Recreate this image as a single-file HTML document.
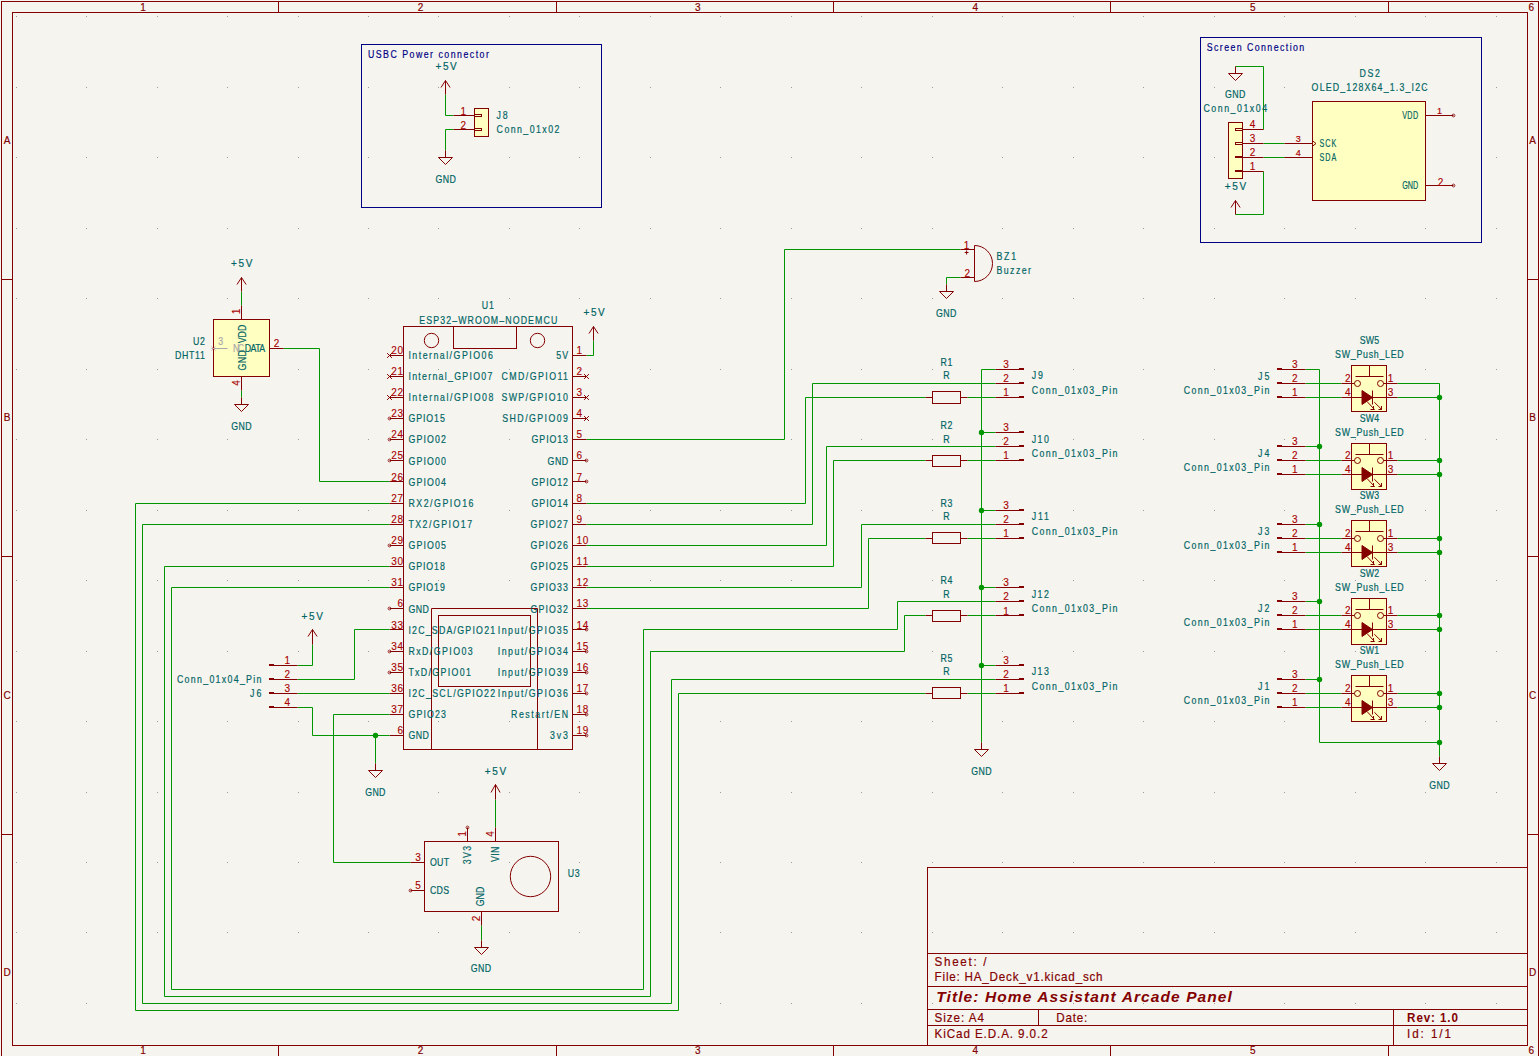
<!DOCTYPE html>
<html><head><meta charset="utf-8"><style>
html,body{margin:0;padding:0;background:#F5F4EF;}
svg{display:block;}
text{font-family:"Liberation Sans",sans-serif;}
</style></head><body>
<svg width="1539" height="1056" viewBox="0 0 1539 1056">
<rect x="0" y="0" width="1539" height="1056" fill="#F5F4EF"/>
<rect x="16" y="16" width="1" height="1" fill="#9A9A9A"/>
<rect x="16" y="87" width="1" height="1" fill="#9A9A9A"/>
<rect x="16" y="157" width="1" height="1" fill="#9A9A9A"/>
<rect x="16" y="228" width="1" height="1" fill="#9A9A9A"/>
<rect x="16" y="298" width="1" height="1" fill="#9A9A9A"/>
<rect x="16" y="369" width="1" height="1" fill="#9A9A9A"/>
<rect x="16" y="439" width="1" height="1" fill="#9A9A9A"/>
<rect x="16" y="510" width="1" height="1" fill="#9A9A9A"/>
<rect x="16" y="580" width="1" height="1" fill="#9A9A9A"/>
<rect x="16" y="651" width="1" height="1" fill="#9A9A9A"/>
<rect x="16" y="721" width="1" height="1" fill="#9A9A9A"/>
<rect x="16" y="792" width="1" height="1" fill="#9A9A9A"/>
<rect x="16" y="862" width="1" height="1" fill="#9A9A9A"/>
<rect x="16" y="932" width="1" height="1" fill="#9A9A9A"/>
<rect x="16" y="1003" width="1" height="1" fill="#9A9A9A"/>
<rect x="86" y="16" width="1" height="1" fill="#9A9A9A"/>
<rect x="86" y="87" width="1" height="1" fill="#9A9A9A"/>
<rect x="86" y="157" width="1" height="1" fill="#9A9A9A"/>
<rect x="86" y="228" width="1" height="1" fill="#9A9A9A"/>
<rect x="86" y="298" width="1" height="1" fill="#9A9A9A"/>
<rect x="86" y="369" width="1" height="1" fill="#9A9A9A"/>
<rect x="86" y="439" width="1" height="1" fill="#9A9A9A"/>
<rect x="86" y="510" width="1" height="1" fill="#9A9A9A"/>
<rect x="86" y="580" width="1" height="1" fill="#9A9A9A"/>
<rect x="86" y="651" width="1" height="1" fill="#9A9A9A"/>
<rect x="86" y="721" width="1" height="1" fill="#9A9A9A"/>
<rect x="86" y="792" width="1" height="1" fill="#9A9A9A"/>
<rect x="86" y="862" width="1" height="1" fill="#9A9A9A"/>
<rect x="86" y="932" width="1" height="1" fill="#9A9A9A"/>
<rect x="86" y="1003" width="1" height="1" fill="#9A9A9A"/>
<rect x="157" y="16" width="1" height="1" fill="#9A9A9A"/>
<rect x="157" y="87" width="1" height="1" fill="#9A9A9A"/>
<rect x="157" y="157" width="1" height="1" fill="#9A9A9A"/>
<rect x="157" y="228" width="1" height="1" fill="#9A9A9A"/>
<rect x="157" y="298" width="1" height="1" fill="#9A9A9A"/>
<rect x="157" y="369" width="1" height="1" fill="#9A9A9A"/>
<rect x="157" y="439" width="1" height="1" fill="#9A9A9A"/>
<rect x="157" y="510" width="1" height="1" fill="#9A9A9A"/>
<rect x="157" y="580" width="1" height="1" fill="#9A9A9A"/>
<rect x="157" y="651" width="1" height="1" fill="#9A9A9A"/>
<rect x="157" y="721" width="1" height="1" fill="#9A9A9A"/>
<rect x="157" y="792" width="1" height="1" fill="#9A9A9A"/>
<rect x="157" y="862" width="1" height="1" fill="#9A9A9A"/>
<rect x="157" y="932" width="1" height="1" fill="#9A9A9A"/>
<rect x="157" y="1003" width="1" height="1" fill="#9A9A9A"/>
<rect x="227" y="16" width="1" height="1" fill="#9A9A9A"/>
<rect x="227" y="87" width="1" height="1" fill="#9A9A9A"/>
<rect x="227" y="157" width="1" height="1" fill="#9A9A9A"/>
<rect x="227" y="228" width="1" height="1" fill="#9A9A9A"/>
<rect x="227" y="298" width="1" height="1" fill="#9A9A9A"/>
<rect x="227" y="369" width="1" height="1" fill="#9A9A9A"/>
<rect x="227" y="439" width="1" height="1" fill="#9A9A9A"/>
<rect x="227" y="510" width="1" height="1" fill="#9A9A9A"/>
<rect x="227" y="580" width="1" height="1" fill="#9A9A9A"/>
<rect x="227" y="651" width="1" height="1" fill="#9A9A9A"/>
<rect x="227" y="721" width="1" height="1" fill="#9A9A9A"/>
<rect x="227" y="792" width="1" height="1" fill="#9A9A9A"/>
<rect x="227" y="862" width="1" height="1" fill="#9A9A9A"/>
<rect x="227" y="932" width="1" height="1" fill="#9A9A9A"/>
<rect x="227" y="1003" width="1" height="1" fill="#9A9A9A"/>
<rect x="298" y="16" width="1" height="1" fill="#9A9A9A"/>
<rect x="298" y="87" width="1" height="1" fill="#9A9A9A"/>
<rect x="298" y="157" width="1" height="1" fill="#9A9A9A"/>
<rect x="298" y="228" width="1" height="1" fill="#9A9A9A"/>
<rect x="298" y="298" width="1" height="1" fill="#9A9A9A"/>
<rect x="298" y="369" width="1" height="1" fill="#9A9A9A"/>
<rect x="298" y="439" width="1" height="1" fill="#9A9A9A"/>
<rect x="298" y="510" width="1" height="1" fill="#9A9A9A"/>
<rect x="298" y="580" width="1" height="1" fill="#9A9A9A"/>
<rect x="298" y="651" width="1" height="1" fill="#9A9A9A"/>
<rect x="298" y="721" width="1" height="1" fill="#9A9A9A"/>
<rect x="298" y="792" width="1" height="1" fill="#9A9A9A"/>
<rect x="298" y="862" width="1" height="1" fill="#9A9A9A"/>
<rect x="298" y="932" width="1" height="1" fill="#9A9A9A"/>
<rect x="298" y="1003" width="1" height="1" fill="#9A9A9A"/>
<rect x="368" y="16" width="1" height="1" fill="#9A9A9A"/>
<rect x="368" y="87" width="1" height="1" fill="#9A9A9A"/>
<rect x="368" y="157" width="1" height="1" fill="#9A9A9A"/>
<rect x="368" y="228" width="1" height="1" fill="#9A9A9A"/>
<rect x="368" y="298" width="1" height="1" fill="#9A9A9A"/>
<rect x="368" y="369" width="1" height="1" fill="#9A9A9A"/>
<rect x="368" y="439" width="1" height="1" fill="#9A9A9A"/>
<rect x="368" y="510" width="1" height="1" fill="#9A9A9A"/>
<rect x="368" y="580" width="1" height="1" fill="#9A9A9A"/>
<rect x="368" y="651" width="1" height="1" fill="#9A9A9A"/>
<rect x="368" y="721" width="1" height="1" fill="#9A9A9A"/>
<rect x="368" y="792" width="1" height="1" fill="#9A9A9A"/>
<rect x="368" y="862" width="1" height="1" fill="#9A9A9A"/>
<rect x="368" y="932" width="1" height="1" fill="#9A9A9A"/>
<rect x="368" y="1003" width="1" height="1" fill="#9A9A9A"/>
<rect x="438" y="16" width="1" height="1" fill="#9A9A9A"/>
<rect x="438" y="87" width="1" height="1" fill="#9A9A9A"/>
<rect x="438" y="157" width="1" height="1" fill="#9A9A9A"/>
<rect x="438" y="228" width="1" height="1" fill="#9A9A9A"/>
<rect x="438" y="298" width="1" height="1" fill="#9A9A9A"/>
<rect x="438" y="369" width="1" height="1" fill="#9A9A9A"/>
<rect x="438" y="439" width="1" height="1" fill="#9A9A9A"/>
<rect x="438" y="510" width="1" height="1" fill="#9A9A9A"/>
<rect x="438" y="580" width="1" height="1" fill="#9A9A9A"/>
<rect x="438" y="651" width="1" height="1" fill="#9A9A9A"/>
<rect x="438" y="721" width="1" height="1" fill="#9A9A9A"/>
<rect x="438" y="792" width="1" height="1" fill="#9A9A9A"/>
<rect x="438" y="862" width="1" height="1" fill="#9A9A9A"/>
<rect x="438" y="932" width="1" height="1" fill="#9A9A9A"/>
<rect x="438" y="1003" width="1" height="1" fill="#9A9A9A"/>
<rect x="509" y="16" width="1" height="1" fill="#9A9A9A"/>
<rect x="509" y="87" width="1" height="1" fill="#9A9A9A"/>
<rect x="509" y="157" width="1" height="1" fill="#9A9A9A"/>
<rect x="509" y="228" width="1" height="1" fill="#9A9A9A"/>
<rect x="509" y="298" width="1" height="1" fill="#9A9A9A"/>
<rect x="509" y="369" width="1" height="1" fill="#9A9A9A"/>
<rect x="509" y="439" width="1" height="1" fill="#9A9A9A"/>
<rect x="509" y="510" width="1" height="1" fill="#9A9A9A"/>
<rect x="509" y="580" width="1" height="1" fill="#9A9A9A"/>
<rect x="509" y="651" width="1" height="1" fill="#9A9A9A"/>
<rect x="509" y="721" width="1" height="1" fill="#9A9A9A"/>
<rect x="509" y="792" width="1" height="1" fill="#9A9A9A"/>
<rect x="509" y="862" width="1" height="1" fill="#9A9A9A"/>
<rect x="509" y="932" width="1" height="1" fill="#9A9A9A"/>
<rect x="509" y="1003" width="1" height="1" fill="#9A9A9A"/>
<rect x="579" y="16" width="1" height="1" fill="#9A9A9A"/>
<rect x="579" y="87" width="1" height="1" fill="#9A9A9A"/>
<rect x="579" y="157" width="1" height="1" fill="#9A9A9A"/>
<rect x="579" y="228" width="1" height="1" fill="#9A9A9A"/>
<rect x="579" y="298" width="1" height="1" fill="#9A9A9A"/>
<rect x="579" y="369" width="1" height="1" fill="#9A9A9A"/>
<rect x="579" y="439" width="1" height="1" fill="#9A9A9A"/>
<rect x="579" y="510" width="1" height="1" fill="#9A9A9A"/>
<rect x="579" y="580" width="1" height="1" fill="#9A9A9A"/>
<rect x="579" y="651" width="1" height="1" fill="#9A9A9A"/>
<rect x="579" y="721" width="1" height="1" fill="#9A9A9A"/>
<rect x="579" y="792" width="1" height="1" fill="#9A9A9A"/>
<rect x="579" y="862" width="1" height="1" fill="#9A9A9A"/>
<rect x="579" y="932" width="1" height="1" fill="#9A9A9A"/>
<rect x="579" y="1003" width="1" height="1" fill="#9A9A9A"/>
<rect x="650" y="16" width="1" height="1" fill="#9A9A9A"/>
<rect x="650" y="87" width="1" height="1" fill="#9A9A9A"/>
<rect x="650" y="157" width="1" height="1" fill="#9A9A9A"/>
<rect x="650" y="228" width="1" height="1" fill="#9A9A9A"/>
<rect x="650" y="298" width="1" height="1" fill="#9A9A9A"/>
<rect x="650" y="369" width="1" height="1" fill="#9A9A9A"/>
<rect x="650" y="439" width="1" height="1" fill="#9A9A9A"/>
<rect x="650" y="510" width="1" height="1" fill="#9A9A9A"/>
<rect x="650" y="580" width="1" height="1" fill="#9A9A9A"/>
<rect x="650" y="651" width="1" height="1" fill="#9A9A9A"/>
<rect x="650" y="721" width="1" height="1" fill="#9A9A9A"/>
<rect x="650" y="792" width="1" height="1" fill="#9A9A9A"/>
<rect x="650" y="862" width="1" height="1" fill="#9A9A9A"/>
<rect x="650" y="932" width="1" height="1" fill="#9A9A9A"/>
<rect x="650" y="1003" width="1" height="1" fill="#9A9A9A"/>
<rect x="720" y="16" width="1" height="1" fill="#9A9A9A"/>
<rect x="720" y="87" width="1" height="1" fill="#9A9A9A"/>
<rect x="720" y="157" width="1" height="1" fill="#9A9A9A"/>
<rect x="720" y="228" width="1" height="1" fill="#9A9A9A"/>
<rect x="720" y="298" width="1" height="1" fill="#9A9A9A"/>
<rect x="720" y="369" width="1" height="1" fill="#9A9A9A"/>
<rect x="720" y="439" width="1" height="1" fill="#9A9A9A"/>
<rect x="720" y="510" width="1" height="1" fill="#9A9A9A"/>
<rect x="720" y="580" width="1" height="1" fill="#9A9A9A"/>
<rect x="720" y="651" width="1" height="1" fill="#9A9A9A"/>
<rect x="720" y="721" width="1" height="1" fill="#9A9A9A"/>
<rect x="720" y="792" width="1" height="1" fill="#9A9A9A"/>
<rect x="720" y="862" width="1" height="1" fill="#9A9A9A"/>
<rect x="720" y="932" width="1" height="1" fill="#9A9A9A"/>
<rect x="720" y="1003" width="1" height="1" fill="#9A9A9A"/>
<rect x="791" y="16" width="1" height="1" fill="#9A9A9A"/>
<rect x="791" y="87" width="1" height="1" fill="#9A9A9A"/>
<rect x="791" y="157" width="1" height="1" fill="#9A9A9A"/>
<rect x="791" y="228" width="1" height="1" fill="#9A9A9A"/>
<rect x="791" y="298" width="1" height="1" fill="#9A9A9A"/>
<rect x="791" y="369" width="1" height="1" fill="#9A9A9A"/>
<rect x="791" y="439" width="1" height="1" fill="#9A9A9A"/>
<rect x="791" y="510" width="1" height="1" fill="#9A9A9A"/>
<rect x="791" y="580" width="1" height="1" fill="#9A9A9A"/>
<rect x="791" y="651" width="1" height="1" fill="#9A9A9A"/>
<rect x="791" y="721" width="1" height="1" fill="#9A9A9A"/>
<rect x="791" y="792" width="1" height="1" fill="#9A9A9A"/>
<rect x="791" y="862" width="1" height="1" fill="#9A9A9A"/>
<rect x="791" y="932" width="1" height="1" fill="#9A9A9A"/>
<rect x="791" y="1003" width="1" height="1" fill="#9A9A9A"/>
<rect x="861" y="16" width="1" height="1" fill="#9A9A9A"/>
<rect x="861" y="87" width="1" height="1" fill="#9A9A9A"/>
<rect x="861" y="157" width="1" height="1" fill="#9A9A9A"/>
<rect x="861" y="228" width="1" height="1" fill="#9A9A9A"/>
<rect x="861" y="298" width="1" height="1" fill="#9A9A9A"/>
<rect x="861" y="369" width="1" height="1" fill="#9A9A9A"/>
<rect x="861" y="439" width="1" height="1" fill="#9A9A9A"/>
<rect x="861" y="510" width="1" height="1" fill="#9A9A9A"/>
<rect x="861" y="580" width="1" height="1" fill="#9A9A9A"/>
<rect x="861" y="651" width="1" height="1" fill="#9A9A9A"/>
<rect x="861" y="721" width="1" height="1" fill="#9A9A9A"/>
<rect x="861" y="792" width="1" height="1" fill="#9A9A9A"/>
<rect x="861" y="862" width="1" height="1" fill="#9A9A9A"/>
<rect x="861" y="932" width="1" height="1" fill="#9A9A9A"/>
<rect x="861" y="1003" width="1" height="1" fill="#9A9A9A"/>
<rect x="932" y="16" width="1" height="1" fill="#9A9A9A"/>
<rect x="932" y="87" width="1" height="1" fill="#9A9A9A"/>
<rect x="932" y="157" width="1" height="1" fill="#9A9A9A"/>
<rect x="932" y="228" width="1" height="1" fill="#9A9A9A"/>
<rect x="932" y="298" width="1" height="1" fill="#9A9A9A"/>
<rect x="932" y="369" width="1" height="1" fill="#9A9A9A"/>
<rect x="932" y="439" width="1" height="1" fill="#9A9A9A"/>
<rect x="932" y="510" width="1" height="1" fill="#9A9A9A"/>
<rect x="932" y="580" width="1" height="1" fill="#9A9A9A"/>
<rect x="932" y="651" width="1" height="1" fill="#9A9A9A"/>
<rect x="932" y="721" width="1" height="1" fill="#9A9A9A"/>
<rect x="932" y="792" width="1" height="1" fill="#9A9A9A"/>
<rect x="932" y="862" width="1" height="1" fill="#9A9A9A"/>
<rect x="932" y="932" width="1" height="1" fill="#9A9A9A"/>
<rect x="932" y="1003" width="1" height="1" fill="#9A9A9A"/>
<rect x="1002" y="16" width="1" height="1" fill="#9A9A9A"/>
<rect x="1002" y="87" width="1" height="1" fill="#9A9A9A"/>
<rect x="1002" y="157" width="1" height="1" fill="#9A9A9A"/>
<rect x="1002" y="228" width="1" height="1" fill="#9A9A9A"/>
<rect x="1002" y="298" width="1" height="1" fill="#9A9A9A"/>
<rect x="1002" y="369" width="1" height="1" fill="#9A9A9A"/>
<rect x="1002" y="439" width="1" height="1" fill="#9A9A9A"/>
<rect x="1002" y="510" width="1" height="1" fill="#9A9A9A"/>
<rect x="1002" y="580" width="1" height="1" fill="#9A9A9A"/>
<rect x="1002" y="651" width="1" height="1" fill="#9A9A9A"/>
<rect x="1002" y="721" width="1" height="1" fill="#9A9A9A"/>
<rect x="1002" y="792" width="1" height="1" fill="#9A9A9A"/>
<rect x="1002" y="862" width="1" height="1" fill="#9A9A9A"/>
<rect x="1002" y="932" width="1" height="1" fill="#9A9A9A"/>
<rect x="1002" y="1003" width="1" height="1" fill="#9A9A9A"/>
<rect x="1073" y="16" width="1" height="1" fill="#9A9A9A"/>
<rect x="1073" y="87" width="1" height="1" fill="#9A9A9A"/>
<rect x="1073" y="157" width="1" height="1" fill="#9A9A9A"/>
<rect x="1073" y="228" width="1" height="1" fill="#9A9A9A"/>
<rect x="1073" y="298" width="1" height="1" fill="#9A9A9A"/>
<rect x="1073" y="369" width="1" height="1" fill="#9A9A9A"/>
<rect x="1073" y="439" width="1" height="1" fill="#9A9A9A"/>
<rect x="1073" y="510" width="1" height="1" fill="#9A9A9A"/>
<rect x="1073" y="580" width="1" height="1" fill="#9A9A9A"/>
<rect x="1073" y="651" width="1" height="1" fill="#9A9A9A"/>
<rect x="1073" y="721" width="1" height="1" fill="#9A9A9A"/>
<rect x="1073" y="792" width="1" height="1" fill="#9A9A9A"/>
<rect x="1073" y="862" width="1" height="1" fill="#9A9A9A"/>
<rect x="1073" y="932" width="1" height="1" fill="#9A9A9A"/>
<rect x="1073" y="1003" width="1" height="1" fill="#9A9A9A"/>
<rect x="1143" y="16" width="1" height="1" fill="#9A9A9A"/>
<rect x="1143" y="87" width="1" height="1" fill="#9A9A9A"/>
<rect x="1143" y="157" width="1" height="1" fill="#9A9A9A"/>
<rect x="1143" y="228" width="1" height="1" fill="#9A9A9A"/>
<rect x="1143" y="298" width="1" height="1" fill="#9A9A9A"/>
<rect x="1143" y="369" width="1" height="1" fill="#9A9A9A"/>
<rect x="1143" y="439" width="1" height="1" fill="#9A9A9A"/>
<rect x="1143" y="510" width="1" height="1" fill="#9A9A9A"/>
<rect x="1143" y="580" width="1" height="1" fill="#9A9A9A"/>
<rect x="1143" y="651" width="1" height="1" fill="#9A9A9A"/>
<rect x="1143" y="721" width="1" height="1" fill="#9A9A9A"/>
<rect x="1143" y="792" width="1" height="1" fill="#9A9A9A"/>
<rect x="1143" y="862" width="1" height="1" fill="#9A9A9A"/>
<rect x="1143" y="932" width="1" height="1" fill="#9A9A9A"/>
<rect x="1143" y="1003" width="1" height="1" fill="#9A9A9A"/>
<rect x="1214" y="16" width="1" height="1" fill="#9A9A9A"/>
<rect x="1214" y="87" width="1" height="1" fill="#9A9A9A"/>
<rect x="1214" y="157" width="1" height="1" fill="#9A9A9A"/>
<rect x="1214" y="228" width="1" height="1" fill="#9A9A9A"/>
<rect x="1214" y="298" width="1" height="1" fill="#9A9A9A"/>
<rect x="1214" y="369" width="1" height="1" fill="#9A9A9A"/>
<rect x="1214" y="439" width="1" height="1" fill="#9A9A9A"/>
<rect x="1214" y="510" width="1" height="1" fill="#9A9A9A"/>
<rect x="1214" y="580" width="1" height="1" fill="#9A9A9A"/>
<rect x="1214" y="651" width="1" height="1" fill="#9A9A9A"/>
<rect x="1214" y="721" width="1" height="1" fill="#9A9A9A"/>
<rect x="1214" y="792" width="1" height="1" fill="#9A9A9A"/>
<rect x="1214" y="862" width="1" height="1" fill="#9A9A9A"/>
<rect x="1214" y="932" width="1" height="1" fill="#9A9A9A"/>
<rect x="1214" y="1003" width="1" height="1" fill="#9A9A9A"/>
<rect x="1284" y="16" width="1" height="1" fill="#9A9A9A"/>
<rect x="1284" y="87" width="1" height="1" fill="#9A9A9A"/>
<rect x="1284" y="157" width="1" height="1" fill="#9A9A9A"/>
<rect x="1284" y="228" width="1" height="1" fill="#9A9A9A"/>
<rect x="1284" y="298" width="1" height="1" fill="#9A9A9A"/>
<rect x="1284" y="369" width="1" height="1" fill="#9A9A9A"/>
<rect x="1284" y="439" width="1" height="1" fill="#9A9A9A"/>
<rect x="1284" y="510" width="1" height="1" fill="#9A9A9A"/>
<rect x="1284" y="580" width="1" height="1" fill="#9A9A9A"/>
<rect x="1284" y="651" width="1" height="1" fill="#9A9A9A"/>
<rect x="1284" y="721" width="1" height="1" fill="#9A9A9A"/>
<rect x="1284" y="792" width="1" height="1" fill="#9A9A9A"/>
<rect x="1284" y="862" width="1" height="1" fill="#9A9A9A"/>
<rect x="1284" y="932" width="1" height="1" fill="#9A9A9A"/>
<rect x="1284" y="1003" width="1" height="1" fill="#9A9A9A"/>
<rect x="1355" y="16" width="1" height="1" fill="#9A9A9A"/>
<rect x="1355" y="87" width="1" height="1" fill="#9A9A9A"/>
<rect x="1355" y="157" width="1" height="1" fill="#9A9A9A"/>
<rect x="1355" y="228" width="1" height="1" fill="#9A9A9A"/>
<rect x="1355" y="298" width="1" height="1" fill="#9A9A9A"/>
<rect x="1355" y="369" width="1" height="1" fill="#9A9A9A"/>
<rect x="1355" y="439" width="1" height="1" fill="#9A9A9A"/>
<rect x="1355" y="510" width="1" height="1" fill="#9A9A9A"/>
<rect x="1355" y="580" width="1" height="1" fill="#9A9A9A"/>
<rect x="1355" y="651" width="1" height="1" fill="#9A9A9A"/>
<rect x="1355" y="721" width="1" height="1" fill="#9A9A9A"/>
<rect x="1355" y="792" width="1" height="1" fill="#9A9A9A"/>
<rect x="1355" y="862" width="1" height="1" fill="#9A9A9A"/>
<rect x="1355" y="932" width="1" height="1" fill="#9A9A9A"/>
<rect x="1355" y="1003" width="1" height="1" fill="#9A9A9A"/>
<rect x="1425" y="16" width="1" height="1" fill="#9A9A9A"/>
<rect x="1425" y="87" width="1" height="1" fill="#9A9A9A"/>
<rect x="1425" y="157" width="1" height="1" fill="#9A9A9A"/>
<rect x="1425" y="228" width="1" height="1" fill="#9A9A9A"/>
<rect x="1425" y="298" width="1" height="1" fill="#9A9A9A"/>
<rect x="1425" y="369" width="1" height="1" fill="#9A9A9A"/>
<rect x="1425" y="439" width="1" height="1" fill="#9A9A9A"/>
<rect x="1425" y="510" width="1" height="1" fill="#9A9A9A"/>
<rect x="1425" y="580" width="1" height="1" fill="#9A9A9A"/>
<rect x="1425" y="651" width="1" height="1" fill="#9A9A9A"/>
<rect x="1425" y="721" width="1" height="1" fill="#9A9A9A"/>
<rect x="1425" y="792" width="1" height="1" fill="#9A9A9A"/>
<rect x="1425" y="862" width="1" height="1" fill="#9A9A9A"/>
<rect x="1425" y="932" width="1" height="1" fill="#9A9A9A"/>
<rect x="1425" y="1003" width="1" height="1" fill="#9A9A9A"/>
<rect x="1496" y="16" width="1" height="1" fill="#9A9A9A"/>
<rect x="1496" y="87" width="1" height="1" fill="#9A9A9A"/>
<rect x="1496" y="157" width="1" height="1" fill="#9A9A9A"/>
<rect x="1496" y="228" width="1" height="1" fill="#9A9A9A"/>
<rect x="1496" y="298" width="1" height="1" fill="#9A9A9A"/>
<rect x="1496" y="369" width="1" height="1" fill="#9A9A9A"/>
<rect x="1496" y="439" width="1" height="1" fill="#9A9A9A"/>
<rect x="1496" y="510" width="1" height="1" fill="#9A9A9A"/>
<rect x="1496" y="580" width="1" height="1" fill="#9A9A9A"/>
<rect x="1496" y="651" width="1" height="1" fill="#9A9A9A"/>
<rect x="1496" y="721" width="1" height="1" fill="#9A9A9A"/>
<rect x="1496" y="792" width="1" height="1" fill="#9A9A9A"/>
<rect x="1496" y="862" width="1" height="1" fill="#9A9A9A"/>
<rect x="1496" y="932" width="1" height="1" fill="#9A9A9A"/>
<rect x="1496" y="1003" width="1" height="1" fill="#9A9A9A"/>
<rect x="1.5" y="1.5" width="1537" height="1056" stroke="#840000" stroke-width="1" fill="none"/>
<rect x="12.5" y="12.5" width="1515" height="1033" stroke="#840000" stroke-width="1" fill="none"/>
<line x1="278.5" y1="1.5" x2="278.5" y2="12.5" stroke="#840000" stroke-width="1"/>
<line x1="278.5" y1="1045.5" x2="278.5" y2="1056" stroke="#840000" stroke-width="1"/>
<line x1="556.5" y1="1.5" x2="556.5" y2="12.5" stroke="#840000" stroke-width="1"/>
<line x1="556.5" y1="1045.5" x2="556.5" y2="1056" stroke="#840000" stroke-width="1"/>
<line x1="833.5" y1="1.5" x2="833.5" y2="12.5" stroke="#840000" stroke-width="1"/>
<line x1="833.5" y1="1045.5" x2="833.5" y2="1056" stroke="#840000" stroke-width="1"/>
<line x1="1110.5" y1="1.5" x2="1110.5" y2="12.5" stroke="#840000" stroke-width="1"/>
<line x1="1110.5" y1="1045.5" x2="1110.5" y2="1056" stroke="#840000" stroke-width="1"/>
<line x1="1388.5" y1="1.5" x2="1388.5" y2="12.5" stroke="#840000" stroke-width="1"/>
<line x1="1388.5" y1="1045.5" x2="1388.5" y2="1056" stroke="#840000" stroke-width="1"/>
<line x1="1.5" y1="279.5" x2="12.5" y2="279.5" stroke="#840000" stroke-width="1"/>
<line x1="1527.5" y1="279.5" x2="1538.5" y2="279.5" stroke="#840000" stroke-width="1"/>
<line x1="1.5" y1="556.5" x2="12.5" y2="556.5" stroke="#840000" stroke-width="1"/>
<line x1="1527.5" y1="556.5" x2="1538.5" y2="556.5" stroke="#840000" stroke-width="1"/>
<line x1="1.5" y1="834.5" x2="12.5" y2="834.5" stroke="#840000" stroke-width="1"/>
<line x1="1527.5" y1="834.5" x2="1538.5" y2="834.5" stroke="#840000" stroke-width="1"/>
<text transform="translate(143 10.9)" fill="#840000" font-size="10" text-anchor="middle" textLength="5.6" lengthAdjust="spacing" stroke="#840000" stroke-width="0.18">1</text>
<text transform="translate(143 1053.6)" fill="#840000" font-size="10" text-anchor="middle" textLength="5.6" lengthAdjust="spacing" stroke="#840000" stroke-width="0.18">1</text>
<text transform="translate(420.45 10.9)" fill="#840000" font-size="10" text-anchor="middle" textLength="5.8" lengthAdjust="spacing" stroke="#840000" stroke-width="0.18">2</text>
<text transform="translate(420.45 1053.6)" fill="#840000" font-size="10" text-anchor="middle" textLength="5.8" lengthAdjust="spacing" stroke="#840000" stroke-width="0.18">2</text>
<text transform="translate(697.9 10.9)" fill="#840000" font-size="10" text-anchor="middle" textLength="5.8" lengthAdjust="spacing" stroke="#840000" stroke-width="0.18">3</text>
<text transform="translate(697.9 1053.6)" fill="#840000" font-size="10" text-anchor="middle" textLength="5.8" lengthAdjust="spacing" stroke="#840000" stroke-width="0.18">3</text>
<text transform="translate(975.35 10.9)" fill="#840000" font-size="10" text-anchor="middle" textLength="5.8" lengthAdjust="spacing" stroke="#840000" stroke-width="0.18">4</text>
<text transform="translate(975.35 1053.6)" fill="#840000" font-size="10" text-anchor="middle" textLength="5.8" lengthAdjust="spacing" stroke="#840000" stroke-width="0.18">4</text>
<text transform="translate(1252.8 10.9)" fill="#840000" font-size="10" text-anchor="middle" textLength="5.8" lengthAdjust="spacing" stroke="#840000" stroke-width="0.18">5</text>
<text transform="translate(1252.8 1053.6)" fill="#840000" font-size="10" text-anchor="middle" textLength="5.8" lengthAdjust="spacing" stroke="#840000" stroke-width="0.18">5</text>
<text transform="translate(1531.25 10.9)" fill="#840000" font-size="10" text-anchor="middle" textLength="5.8" lengthAdjust="spacing" stroke="#840000" stroke-width="0.18">6</text>
<text transform="translate(1531.25 1053.6)" fill="#840000" font-size="10" text-anchor="middle" textLength="5.8" lengthAdjust="spacing" stroke="#840000" stroke-width="0.18">6</text>
<text transform="translate(7 143.8)" fill="#840000" font-size="10" text-anchor="middle" textLength="5.8" lengthAdjust="spacing" stroke="#840000" stroke-width="0.18">A</text>
<text transform="translate(1532.5 143.8)" fill="#840000" font-size="10" text-anchor="middle" textLength="5.8" lengthAdjust="spacing" stroke="#840000" stroke-width="0.18">A</text>
<text transform="translate(7 421.25)" fill="#840000" font-size="10" text-anchor="middle" textLength="5.8" lengthAdjust="spacing" stroke="#840000" stroke-width="0.18">B</text>
<text transform="translate(1532.5 421.25)" fill="#840000" font-size="10" text-anchor="middle" textLength="5.8" lengthAdjust="spacing" stroke="#840000" stroke-width="0.18">B</text>
<text transform="translate(7 698.7)" fill="#840000" font-size="10" text-anchor="middle" textLength="5.8" lengthAdjust="spacing" stroke="#840000" stroke-width="0.18">C</text>
<text transform="translate(1532.5 698.7)" fill="#840000" font-size="10" text-anchor="middle" textLength="5.8" lengthAdjust="spacing" stroke="#840000" stroke-width="0.18">C</text>
<text transform="translate(7 976.15)" fill="#840000" font-size="10" text-anchor="middle" textLength="5.8" lengthAdjust="spacing" stroke="#840000" stroke-width="0.18">D</text>
<text transform="translate(1532.5 976.15)" fill="#840000" font-size="10" text-anchor="middle" textLength="5.8" lengthAdjust="spacing" stroke="#840000" stroke-width="0.18">D</text>
<rect x="927.5" y="867.5" width="600" height="178" stroke="#840000" stroke-width="1" fill="none"/>
<line x1="927.5" y1="953.5" x2="1527.5" y2="953.5" stroke="#840000" stroke-width="1"/>
<line x1="927.5" y1="986.5" x2="1527.5" y2="986.5" stroke="#840000" stroke-width="1"/>
<line x1="927.5" y1="1009.5" x2="1527.5" y2="1009.5" stroke="#840000" stroke-width="1"/>
<line x1="927.5" y1="1025.5" x2="1527.5" y2="1025.5" stroke="#840000" stroke-width="1"/>
<line x1="1038.5" y1="1009.5" x2="1038.5" y2="1025.5" stroke="#840000" stroke-width="1"/>
<line x1="1393.5" y1="1009.5" x2="1393.5" y2="1045.5" stroke="#840000" stroke-width="1"/>
<text transform="translate(934.6 966) scale(0.97 1)" fill="#840000" font-size="12" textLength="53.6" lengthAdjust="spacing" stroke="#840000" stroke-width="0.18">Sheet: /</text>
<text transform="translate(934.6 980.5) scale(0.97 1)" fill="#840000" font-size="12" textLength="173.2" lengthAdjust="spacing" stroke="#840000" stroke-width="0.18">File: HA_Deck_v1.kicad_sch</text>
<text transform="translate(936.2 1002)" fill="#840000" font-size="15.5" textLength="295.7" lengthAdjust="spacing" font-weight="bold" font-style="italic">Title: Home Assistant Arcade Panel</text>
<text transform="translate(934.6 1021.7) scale(0.97 1)" fill="#840000" font-size="12" textLength="50.9" lengthAdjust="spacing" stroke="#840000" stroke-width="0.18">Size: A4</text>
<text transform="translate(1056.2 1021.7) scale(0.97 1)" fill="#840000" font-size="12" textLength="32.0" lengthAdjust="spacing" stroke="#840000" stroke-width="0.18">Date:</text>
<text transform="translate(934.6 1037.7) scale(0.97 1)" fill="#840000" font-size="12" textLength="116.5" lengthAdjust="spacing" stroke="#840000" stroke-width="0.18">KiCad E.D.A. 9.0.2</text>
<text transform="translate(1407.1 1021.9) scale(0.97 1)" fill="#840000" font-size="12" textLength="52.4" lengthAdjust="spacing" font-weight="bold">Rev: 1.0</text>
<text transform="translate(1407.1 1037.8) scale(0.97 1)" fill="#840000" font-size="12" textLength="45.2" lengthAdjust="spacing" stroke="#840000" stroke-width="0.18">Id: 1/1</text>
<rect x="361.5" y="44.5" width="240" height="163" stroke="#000084" stroke-width="1" fill="none"/>
<text transform="translate(367.9 57.5) scale(0.88 1)" fill="#000084" font-size="10.0" textLength="137.5" lengthAdjust="spacing" stroke="#000084" stroke-width="0.18">USBC Power connector</text>
<polyline points="445.5,94.5 445.5,115.5 453.5,115.5" stroke="#009600" stroke-width="1" fill="none"/>
<polyline points="453.5,129.5 445.5,129.5 445.5,150.5" stroke="#009600" stroke-width="1" fill="none"/>
<line x1="453.5" y1="115.5" x2="474.5" y2="115.5" stroke="#840000" stroke-width="1"/>
<line x1="453.5" y1="129.5" x2="474.5" y2="129.5" stroke="#840000" stroke-width="1"/>
<rect x="474.5" y="108.5" width="14" height="28" stroke="#840000" stroke-width="1" fill="#FFFFC2"/>
<rect x="474.5" y="114.5" width="7" height="2" stroke="#840000" stroke-width="1" fill="none"/>
<rect x="474.5" y="128.5" width="7" height="2" stroke="#840000" stroke-width="1" fill="none"/>
<text transform="translate(463.4 114.6)" fill="#A90000" font-size="10.0" text-anchor="middle" textLength="5.6" lengthAdjust="spacing" stroke="#A90000" stroke-width="0.12">1</text>
<text transform="translate(463.4 128.7)" fill="#A90000" font-size="10.0" text-anchor="middle" textLength="5.6" lengthAdjust="spacing" stroke="#A90000" stroke-width="0.12">2</text>
<text transform="translate(496.6 118.5) scale(0.88 1)" fill="#006464" font-size="10.0" textLength="12.5" lengthAdjust="spacing" stroke="#006464" stroke-width="0.18">J8</text>
<text transform="translate(496.6 133) scale(0.88 1)" fill="#006464" font-size="10.0" textLength="71.4" lengthAdjust="spacing" stroke="#006464" stroke-width="0.18">Conn_01x02</text>
<line x1="445.5" y1="94.5" x2="445.5" y2="80.5" stroke="#840000" stroke-width="1"/>
<polyline points="441,87.5 445.5,80.5 450.1,87.5" stroke="#840000" stroke-width="1" fill="none"/>
<text transform="translate(446.08 69.81)" fill="#006464" font-size="10.0" text-anchor="middle" textLength="21.3" lengthAdjust="spacing" stroke="#006464" stroke-width="0.18">+5V</text>
<line x1="445.5" y1="150.5" x2="445.5" y2="157.5" stroke="#840000" stroke-width="1"/>
<polygon points="438.5,157.5 452.5,157.5 445.5,164.5" stroke="#840000" stroke-width="1" fill="none"/>
<text transform="translate(445.78 182.89) scale(0.88 1)" fill="#006464" font-size="10.0" text-anchor="middle" textLength="23.1" lengthAdjust="spacing" stroke="#006464" stroke-width="0.18">GND</text>
<polyline points="241.5,305.5 241.5,291.5" stroke="#009600" stroke-width="1" fill="none"/>
<polyline points="283.5,348.5 319.5,348.5 319.5,481.5 389.5,481.5" stroke="#009600" stroke-width="1" fill="none"/>
<polyline points="241.5,390.5 241.5,397.5" stroke="#009600" stroke-width="1" fill="none"/>
<rect x="213.5" y="319.5" width="56" height="57" stroke="#840000" stroke-width="1" fill="#FFFFC2"/>
<line x1="241.5" y1="319.5" x2="241.5" y2="305.5" stroke="#840000" stroke-width="1"/>
<line x1="269.5" y1="348.5" x2="283.5" y2="348.5" stroke="#840000" stroke-width="1"/>
<line x1="241.5" y1="376.5" x2="241.5" y2="390.5" stroke="#840000" stroke-width="1"/>
<line x1="211.5" y1="348.5" x2="227.5" y2="348.5" stroke="#A8A8A8" stroke-width="1"/>
<line x1="211.5" y1="346.5" x2="215.5" y2="350.5" stroke="#E0B0B0" stroke-width="1"/>
<line x1="211.5" y1="350.5" x2="215.5" y2="346.5" stroke="#E0B0B0" stroke-width="1"/>
<text transform="translate(220.6 344.8) scale(0.88 1)" fill="#A8A8A8" font-size="10.0" text-anchor="middle" textLength="6.1" lengthAdjust="spacing" stroke="#A8A8A8" stroke-width="0.18">3</text>
<text transform="translate(233 351.7) scale(0.88 1)" fill="#A8A8A8" font-size="10.0" textLength="12.5" lengthAdjust="spacing" stroke="#A8A8A8" stroke-width="0.18">NC</text>
<text transform="translate(239.8 311.5) rotate(-90)" fill="#A90000" font-size="10.0" text-anchor="middle" textLength="5.6" lengthAdjust="spacing" stroke="#A90000" stroke-width="0.12">1</text>
<text transform="translate(239.8 383) rotate(-90)" fill="#A90000" font-size="10.0" text-anchor="middle" textLength="5.6" lengthAdjust="spacing" stroke="#A90000" stroke-width="0.12">4</text>
<text transform="translate(276.5 347.2)" fill="#A90000" font-size="10.0" text-anchor="middle" textLength="5.6" lengthAdjust="spacing" stroke="#A90000" stroke-width="0.12">2</text>
<text transform="translate(245.5 334) rotate(-90) scale(0.88 1)" fill="#006464" font-size="10.0" text-anchor="middle" textLength="21.0" lengthAdjust="spacing" stroke="#006464" stroke-width="0.18">VDD</text>
<text transform="translate(245.5 360.4) rotate(-90) scale(0.88 1)" fill="#006464" font-size="10.0" text-anchor="middle" textLength="23.2" lengthAdjust="spacing" stroke="#006464" stroke-width="0.18">GND</text>
<text transform="translate(244.7 351.7) scale(0.88 1)" fill="#006464" font-size="10.0" textLength="23.3" lengthAdjust="spacing" stroke="#006464" stroke-width="0.18">DATA</text>
<text transform="translate(204.9 344.9) scale(0.88 1)" fill="#006464" font-size="10.0" text-anchor="end" textLength="13.6" lengthAdjust="spacing" stroke="#006464" stroke-width="0.18">U2</text>
<text transform="translate(204.9 358.5) scale(0.88 1)" fill="#006464" font-size="10.0" text-anchor="end" textLength="34.1" lengthAdjust="spacing" stroke="#006464" stroke-width="0.18">DHT11</text>
<line x1="241.5" y1="291.5" x2="241.5" y2="277.5" stroke="#840000" stroke-width="1"/>
<polyline points="237,284.5 241.5,277.5 246.1,284.5" stroke="#840000" stroke-width="1" fill="none"/>
<text transform="translate(241.7 267.15)" fill="#006464" font-size="10.0" text-anchor="middle" textLength="21.3" lengthAdjust="spacing" stroke="#006464" stroke-width="0.18">+5V</text>
<line x1="241.5" y1="397.5" x2="241.5" y2="404.5" stroke="#840000" stroke-width="1"/>
<polygon points="234.5,404.5 248.5,404.5 241.5,411.5" stroke="#840000" stroke-width="1" fill="none"/>
<text transform="translate(241.4 429.56) scale(0.88 1)" fill="#006464" font-size="10.0" text-anchor="middle" textLength="23.1" lengthAdjust="spacing" stroke="#006464" stroke-width="0.18">GND</text>
<polyline points="586.5,355.5 593.5,355.5 593.5,340.5" stroke="#009600" stroke-width="1" fill="none"/>
<polyline points="586.5,439.5 784.5,439.5 784.5,249.5 960.5,249.5" stroke="#009600" stroke-width="1" fill="none"/>
<polyline points="586.5,503.5 805.5,503.5 805.5,397.5 925.5,397.5" stroke="#009600" stroke-width="1" fill="none"/>
<polyline points="586.5,524.5 812.5,524.5 812.5,383.5 995.5,383.5" stroke="#009600" stroke-width="1" fill="none"/>
<polyline points="586.5,545.5 826.5,545.5 826.5,446.5 995.5,446.5" stroke="#009600" stroke-width="1" fill="none"/>
<polyline points="586.5,566.5 833.5,566.5 833.5,460.5 925.5,460.5" stroke="#009600" stroke-width="1" fill="none"/>
<polyline points="586.5,587.5 861.5,587.5 861.5,524.5 995.5,524.5" stroke="#009600" stroke-width="1" fill="none"/>
<polyline points="586.5,608.5 868.5,608.5 868.5,538.5 925.5,538.5" stroke="#009600" stroke-width="1" fill="none"/>
<polyline points="389.5,587.5 171.5,587.5 171.5,989.5 643.5,989.5 643.5,629.5 897.5,629.5 897.5,601.5 995.5,601.5" stroke="#009600" stroke-width="1" fill="none"/>
<polyline points="389.5,566.5 164.5,566.5 164.5,996.5 650.5,996.5 650.5,651.5 904.5,651.5 904.5,615.5 925.5,615.5" stroke="#009600" stroke-width="1" fill="none"/>
<polyline points="389.5,524.5 142.5,524.5 142.5,1003.5 671.5,1003.5 671.5,679.5 995.5,679.5" stroke="#009600" stroke-width="1" fill="none"/>
<polyline points="389.5,503.5 135.5,503.5 135.5,1010.5 678.5,1010.5 678.5,693.5 925.5,693.5" stroke="#009600" stroke-width="1" fill="none"/>
<polyline points="967.5,397.5 995.5,397.5" stroke="#009600" stroke-width="1" fill="none"/>
<polyline points="967.5,460.5 995.5,460.5" stroke="#009600" stroke-width="1" fill="none"/>
<polyline points="967.5,538.5 995.5,538.5" stroke="#009600" stroke-width="1" fill="none"/>
<polyline points="967.5,615.5 995.5,615.5" stroke="#009600" stroke-width="1" fill="none"/>
<polyline points="967.5,693.5 995.5,693.5" stroke="#009600" stroke-width="1" fill="none"/>
<rect x="403.5" y="326.5" width="169" height="423" stroke="#840000" stroke-width="1" fill="none"/>
<rect x="453.5" y="326.5" width="63" height="22" stroke="#840000" stroke-width="1" fill="none"/>
<circle cx="431.5" cy="340.5" r="7.2" fill="none" stroke="#840000" stroke-width="1"/>
<circle cx="537.5" cy="340.5" r="7.2" fill="none" stroke="#840000" stroke-width="1"/>
<polyline points="431.5,749.5 431.5,608.5 537.5,608.5 537.5,749.5" stroke="#840000" stroke-width="1" fill="none"/>
<rect x="438.5" y="615.5" width="92" height="71" stroke="#840000" stroke-width="1" fill="none"/>
<line x1="389.5" y1="355.5" x2="403.5" y2="355.5" stroke="#840000" stroke-width="1"/>
<text transform="translate(403 353.77)" fill="#A90000" font-size="10.0" text-anchor="end" textLength="11.8" lengthAdjust="spacing" stroke="#A90000" stroke-width="0.12">20</text>
<text transform="translate(408.4 358.87) scale(0.88 1)" fill="#006464" font-size="10.0" textLength="95.9" lengthAdjust="spacing" stroke="#006464" stroke-width="0.18">Internal/GPIO06</text>
<line x1="387.1" y1="353.1" x2="391.9" y2="357.9" stroke="#840000" stroke-width="1"/>
<line x1="387.1" y1="357.9" x2="391.9" y2="353.1" stroke="#840000" stroke-width="1"/>
<line x1="389.5" y1="376.5" x2="403.5" y2="376.5" stroke="#840000" stroke-width="1"/>
<text transform="translate(403 374.92)" fill="#A90000" font-size="10.0" text-anchor="end" textLength="11.8" lengthAdjust="spacing" stroke="#A90000" stroke-width="0.12">21</text>
<text transform="translate(408.4 380.02) scale(0.88 1)" fill="#006464" font-size="10.0" textLength="95.5" lengthAdjust="spacing" stroke="#006464" stroke-width="0.18">Internal_GPIO07</text>
<line x1="387.1" y1="374.1" x2="391.9" y2="378.9" stroke="#840000" stroke-width="1"/>
<line x1="387.1" y1="378.9" x2="391.9" y2="374.1" stroke="#840000" stroke-width="1"/>
<line x1="389.5" y1="397.5" x2="403.5" y2="397.5" stroke="#840000" stroke-width="1"/>
<text transform="translate(403 396.06)" fill="#A90000" font-size="10.0" text-anchor="end" textLength="11.8" lengthAdjust="spacing" stroke="#A90000" stroke-width="0.12">22</text>
<text transform="translate(408.4 401.16) scale(0.88 1)" fill="#006464" font-size="10.0" textLength="96.6" lengthAdjust="spacing" stroke="#006464" stroke-width="0.18">Internal/GPIO08</text>
<line x1="387.1" y1="395.1" x2="391.9" y2="399.9" stroke="#840000" stroke-width="1"/>
<line x1="387.1" y1="399.9" x2="391.9" y2="395.1" stroke="#840000" stroke-width="1"/>
<line x1="389.5" y1="418.5" x2="403.5" y2="418.5" stroke="#840000" stroke-width="1"/>
<text transform="translate(403 417.2)" fill="#A90000" font-size="10.0" text-anchor="end" textLength="11.8" lengthAdjust="spacing" stroke="#A90000" stroke-width="0.12">23</text>
<text transform="translate(408.4 422.3) scale(0.88 1)" fill="#006464" font-size="10.0" textLength="41.4" lengthAdjust="spacing" stroke="#006464" stroke-width="0.18">GPIO15</text>
<circle cx="389.5" cy="418.5" r="1.4" fill="none" stroke="#840000" stroke-width="0.8"/>
<line x1="389.5" y1="439.5" x2="403.5" y2="439.5" stroke="#840000" stroke-width="1"/>
<text transform="translate(403 438.35)" fill="#A90000" font-size="10.0" text-anchor="end" textLength="11.8" lengthAdjust="spacing" stroke="#A90000" stroke-width="0.12">24</text>
<text transform="translate(408.4 443.45) scale(0.88 1)" fill="#006464" font-size="10.0" textLength="42.7" lengthAdjust="spacing" stroke="#006464" stroke-width="0.18">GPIO02</text>
<circle cx="389.5" cy="439.5" r="1.4" fill="none" stroke="#840000" stroke-width="0.8"/>
<line x1="389.5" y1="460.5" x2="403.5" y2="460.5" stroke="#840000" stroke-width="1"/>
<text transform="translate(403 459.49)" fill="#A90000" font-size="10.0" text-anchor="end" textLength="11.8" lengthAdjust="spacing" stroke="#A90000" stroke-width="0.12">25</text>
<text transform="translate(408.4 464.59) scale(0.88 1)" fill="#006464" font-size="10.0" textLength="42.7" lengthAdjust="spacing" stroke="#006464" stroke-width="0.18">GPIO00</text>
<circle cx="389.5" cy="460.5" r="1.4" fill="none" stroke="#840000" stroke-width="0.8"/>
<line x1="389.5" y1="481.5" x2="403.5" y2="481.5" stroke="#840000" stroke-width="1"/>
<text transform="translate(403 480.63)" fill="#A90000" font-size="10.0" text-anchor="end" textLength="11.8" lengthAdjust="spacing" stroke="#A90000" stroke-width="0.12">26</text>
<text transform="translate(408.4 485.73) scale(0.88 1)" fill="#006464" font-size="10.0" textLength="42.7" lengthAdjust="spacing" stroke="#006464" stroke-width="0.18">GPIO04</text>
<line x1="389.5" y1="503.5" x2="403.5" y2="503.5" stroke="#840000" stroke-width="1"/>
<text transform="translate(403 501.77)" fill="#A90000" font-size="10.0" text-anchor="end" textLength="11.8" lengthAdjust="spacing" stroke="#A90000" stroke-width="0.12">27</text>
<text transform="translate(408.4 506.87) scale(0.88 1)" fill="#006464" font-size="10.0" textLength="74.0" lengthAdjust="spacing" stroke="#006464" stroke-width="0.18">RX2/GPIO16</text>
<line x1="389.5" y1="524.5" x2="403.5" y2="524.5" stroke="#840000" stroke-width="1"/>
<text transform="translate(403 522.92)" fill="#A90000" font-size="10.0" text-anchor="end" textLength="11.8" lengthAdjust="spacing" stroke="#A90000" stroke-width="0.12">28</text>
<text transform="translate(408.4 528.02) scale(0.88 1)" fill="#006464" font-size="10.0" textLength="72.4" lengthAdjust="spacing" stroke="#006464" stroke-width="0.18">TX2/GPIO17</text>
<line x1="389.5" y1="545.5" x2="403.5" y2="545.5" stroke="#840000" stroke-width="1"/>
<text transform="translate(403 544.06)" fill="#A90000" font-size="10.0" text-anchor="end" textLength="11.8" lengthAdjust="spacing" stroke="#A90000" stroke-width="0.12">29</text>
<text transform="translate(408.4 549.16) scale(0.88 1)" fill="#006464" font-size="10.0" textLength="42.7" lengthAdjust="spacing" stroke="#006464" stroke-width="0.18">GPIO05</text>
<circle cx="389.5" cy="545.5" r="1.4" fill="none" stroke="#840000" stroke-width="0.8"/>
<line x1="389.5" y1="566.5" x2="403.5" y2="566.5" stroke="#840000" stroke-width="1"/>
<text transform="translate(403 565.2)" fill="#A90000" font-size="10.0" text-anchor="end" textLength="11.8" lengthAdjust="spacing" stroke="#A90000" stroke-width="0.12">30</text>
<text transform="translate(408.4 570.3) scale(0.88 1)" fill="#006464" font-size="10.0" textLength="41.4" lengthAdjust="spacing" stroke="#006464" stroke-width="0.18">GPIO18</text>
<line x1="389.5" y1="587.5" x2="403.5" y2="587.5" stroke="#840000" stroke-width="1"/>
<text transform="translate(403 586.35)" fill="#A90000" font-size="10.0" text-anchor="end" textLength="11.8" lengthAdjust="spacing" stroke="#A90000" stroke-width="0.12">31</text>
<text transform="translate(408.4 591.45) scale(0.88 1)" fill="#006464" font-size="10.0" textLength="41.4" lengthAdjust="spacing" stroke="#006464" stroke-width="0.18">GPIO19</text>
<line x1="389.5" y1="608.5" x2="403.5" y2="608.5" stroke="#840000" stroke-width="1"/>
<text transform="translate(403 607.49)" fill="#A90000" font-size="10.0" text-anchor="end" textLength="5.6" lengthAdjust="spacing" stroke="#A90000" stroke-width="0.12">6</text>
<text transform="translate(408.4 612.59) scale(0.88 1)" fill="#006464" font-size="10.0" textLength="23.2" lengthAdjust="spacing" stroke="#006464" stroke-width="0.18">GND</text>
<circle cx="389.5" cy="608.5" r="1.4" fill="none" stroke="#840000" stroke-width="0.8"/>
<line x1="389.5" y1="629.5" x2="403.5" y2="629.5" stroke="#840000" stroke-width="1"/>
<text transform="translate(403 628.63)" fill="#A90000" font-size="10.0" text-anchor="end" textLength="11.8" lengthAdjust="spacing" stroke="#A90000" stroke-width="0.12">33</text>
<text transform="translate(408.4 633.73) scale(0.88 1)" fill="#006464" font-size="10.0" textLength="98.6" lengthAdjust="spacing" stroke="#006464" stroke-width="0.18">I2C_SDA/GPIO21</text>
<line x1="389.5" y1="651.5" x2="403.5" y2="651.5" stroke="#840000" stroke-width="1"/>
<text transform="translate(403 649.77)" fill="#A90000" font-size="10.0" text-anchor="end" textLength="11.8" lengthAdjust="spacing" stroke="#A90000" stroke-width="0.12">34</text>
<text transform="translate(408.4 654.87) scale(0.88 1)" fill="#006464" font-size="10.0" textLength="73.0" lengthAdjust="spacing" stroke="#006464" stroke-width="0.18">RxD/GPIO03</text>
<circle cx="389.5" cy="651.5" r="1.4" fill="none" stroke="#840000" stroke-width="0.8"/>
<line x1="389.5" y1="672.5" x2="403.5" y2="672.5" stroke="#840000" stroke-width="1"/>
<text transform="translate(403 670.92)" fill="#A90000" font-size="10.0" text-anchor="end" textLength="11.8" lengthAdjust="spacing" stroke="#A90000" stroke-width="0.12">35</text>
<text transform="translate(408.4 676.02) scale(0.88 1)" fill="#006464" font-size="10.0" textLength="70.9" lengthAdjust="spacing" stroke="#006464" stroke-width="0.18">TxD/GPIO01</text>
<circle cx="389.5" cy="672.5" r="1.4" fill="none" stroke="#840000" stroke-width="0.8"/>
<line x1="389.5" y1="693.5" x2="403.5" y2="693.5" stroke="#840000" stroke-width="1"/>
<text transform="translate(403 692.06)" fill="#A90000" font-size="10.0" text-anchor="end" textLength="11.8" lengthAdjust="spacing" stroke="#A90000" stroke-width="0.12">36</text>
<text transform="translate(408.4 697.16) scale(0.88 1)" fill="#006464" font-size="10.0" textLength="98.6" lengthAdjust="spacing" stroke="#006464" stroke-width="0.18">I2C_SCL/GPIO22</text>
<line x1="389.5" y1="714.5" x2="403.5" y2="714.5" stroke="#840000" stroke-width="1"/>
<text transform="translate(403 713.2)" fill="#A90000" font-size="10.0" text-anchor="end" textLength="11.8" lengthAdjust="spacing" stroke="#A90000" stroke-width="0.12">37</text>
<text transform="translate(408.4 718.3) scale(0.88 1)" fill="#006464" font-size="10.0" textLength="42.7" lengthAdjust="spacing" stroke="#006464" stroke-width="0.18">GPIO23</text>
<line x1="389.5" y1="735.5" x2="403.5" y2="735.5" stroke="#840000" stroke-width="1"/>
<text transform="translate(403 734.35)" fill="#A90000" font-size="10.0" text-anchor="end" textLength="5.6" lengthAdjust="spacing" stroke="#A90000" stroke-width="0.12">6</text>
<text transform="translate(408.4 739.45) scale(0.88 1)" fill="#006464" font-size="10.0" textLength="23.2" lengthAdjust="spacing" stroke="#006464" stroke-width="0.18">GND</text>
<line x1="572.5" y1="355.5" x2="586.5" y2="355.5" stroke="#840000" stroke-width="1"/>
<text transform="translate(576.6 353.77)" fill="#A90000" font-size="10.0" textLength="5.6" lengthAdjust="spacing" stroke="#A90000" stroke-width="0.12">1</text>
<text transform="translate(568 358.87) scale(0.88 1)" fill="#006464" font-size="10.0" text-anchor="end" textLength="13.3" lengthAdjust="spacing" stroke="#006464" stroke-width="0.18">5V</text>
<line x1="572.5" y1="376.5" x2="586.5" y2="376.5" stroke="#840000" stroke-width="1"/>
<text transform="translate(576.6 374.92)" fill="#A90000" font-size="10.0" textLength="5.6" lengthAdjust="spacing" stroke="#A90000" stroke-width="0.12">2</text>
<text transform="translate(568 380.02) scale(0.88 1)" fill="#006464" font-size="10.0" text-anchor="end" textLength="75.7" lengthAdjust="spacing" stroke="#006464" stroke-width="0.18">CMD/GPIO11</text>
<line x1="584.1" y1="374.1" x2="588.9" y2="378.9" stroke="#840000" stroke-width="1"/>
<line x1="584.1" y1="378.9" x2="588.9" y2="374.1" stroke="#840000" stroke-width="1"/>
<line x1="572.5" y1="397.5" x2="586.5" y2="397.5" stroke="#840000" stroke-width="1"/>
<text transform="translate(576.6 396.06)" fill="#A90000" font-size="10.0" textLength="5.6" lengthAdjust="spacing" stroke="#A90000" stroke-width="0.12">3</text>
<text transform="translate(568 401.16) scale(0.88 1)" fill="#006464" font-size="10.0" text-anchor="end" textLength="75.7" lengthAdjust="spacing" stroke="#006464" stroke-width="0.18">SWP/GPIO10</text>
<line x1="584.1" y1="395.1" x2="588.9" y2="399.9" stroke="#840000" stroke-width="1"/>
<line x1="584.1" y1="399.9" x2="588.9" y2="395.1" stroke="#840000" stroke-width="1"/>
<line x1="572.5" y1="418.5" x2="586.5" y2="418.5" stroke="#840000" stroke-width="1"/>
<text transform="translate(576.6 417.2)" fill="#A90000" font-size="10.0" textLength="5.6" lengthAdjust="spacing" stroke="#A90000" stroke-width="0.12">4</text>
<text transform="translate(568 422.3) scale(0.88 1)" fill="#006464" font-size="10.0" text-anchor="end" textLength="74.7" lengthAdjust="spacing" stroke="#006464" stroke-width="0.18">SHD/GPIO09</text>
<line x1="584.1" y1="416.1" x2="588.9" y2="420.9" stroke="#840000" stroke-width="1"/>
<line x1="584.1" y1="420.9" x2="588.9" y2="416.1" stroke="#840000" stroke-width="1"/>
<line x1="572.5" y1="439.5" x2="586.5" y2="439.5" stroke="#840000" stroke-width="1"/>
<text transform="translate(576.6 438.35)" fill="#A90000" font-size="10.0" textLength="5.6" lengthAdjust="spacing" stroke="#A90000" stroke-width="0.12">5</text>
<text transform="translate(568 443.45) scale(0.88 1)" fill="#006464" font-size="10.0" text-anchor="end" textLength="41.4" lengthAdjust="spacing" stroke="#006464" stroke-width="0.18">GPIO13</text>
<line x1="572.5" y1="460.5" x2="586.5" y2="460.5" stroke="#840000" stroke-width="1"/>
<text transform="translate(576.6 459.49)" fill="#A90000" font-size="10.0" textLength="5.6" lengthAdjust="spacing" stroke="#A90000" stroke-width="0.12">6</text>
<text transform="translate(568 464.59) scale(0.88 1)" fill="#006464" font-size="10.0" text-anchor="end" textLength="23.2" lengthAdjust="spacing" stroke="#006464" stroke-width="0.18">GND</text>
<circle cx="586.5" cy="460.5" r="1.4" fill="none" stroke="#840000" stroke-width="0.8"/>
<line x1="572.5" y1="481.5" x2="586.5" y2="481.5" stroke="#840000" stroke-width="1"/>
<text transform="translate(576.6 480.63)" fill="#A90000" font-size="10.0" textLength="5.6" lengthAdjust="spacing" stroke="#A90000" stroke-width="0.12">7</text>
<text transform="translate(568 485.73) scale(0.88 1)" fill="#006464" font-size="10.0" text-anchor="end" textLength="41.4" lengthAdjust="spacing" stroke="#006464" stroke-width="0.18">GPIO12</text>
<circle cx="586.5" cy="481.5" r="1.4" fill="none" stroke="#840000" stroke-width="0.8"/>
<line x1="572.5" y1="503.5" x2="586.5" y2="503.5" stroke="#840000" stroke-width="1"/>
<text transform="translate(576.6 501.77)" fill="#A90000" font-size="10.0" textLength="5.6" lengthAdjust="spacing" stroke="#A90000" stroke-width="0.12">8</text>
<text transform="translate(568 506.87) scale(0.88 1)" fill="#006464" font-size="10.0" text-anchor="end" textLength="41.4" lengthAdjust="spacing" stroke="#006464" stroke-width="0.18">GPIO14</text>
<line x1="572.5" y1="524.5" x2="586.5" y2="524.5" stroke="#840000" stroke-width="1"/>
<text transform="translate(576.6 522.92)" fill="#A90000" font-size="10.0" textLength="5.6" lengthAdjust="spacing" stroke="#A90000" stroke-width="0.12">9</text>
<text transform="translate(568 528.02) scale(0.88 1)" fill="#006464" font-size="10.0" text-anchor="end" textLength="42.7" lengthAdjust="spacing" stroke="#006464" stroke-width="0.18">GPIO27</text>
<line x1="572.5" y1="545.5" x2="586.5" y2="545.5" stroke="#840000" stroke-width="1"/>
<text transform="translate(576.6 544.06)" fill="#A90000" font-size="10.0" textLength="11.8" lengthAdjust="spacing" stroke="#A90000" stroke-width="0.12">10</text>
<text transform="translate(568 549.16) scale(0.88 1)" fill="#006464" font-size="10.0" text-anchor="end" textLength="42.7" lengthAdjust="spacing" stroke="#006464" stroke-width="0.18">GPIO26</text>
<line x1="572.5" y1="566.5" x2="586.5" y2="566.5" stroke="#840000" stroke-width="1"/>
<text transform="translate(576.6 565.2)" fill="#A90000" font-size="10.0" textLength="11.8" lengthAdjust="spacing" stroke="#A90000" stroke-width="0.12">11</text>
<text transform="translate(568 570.3) scale(0.88 1)" fill="#006464" font-size="10.0" text-anchor="end" textLength="42.7" lengthAdjust="spacing" stroke="#006464" stroke-width="0.18">GPIO25</text>
<line x1="572.5" y1="587.5" x2="586.5" y2="587.5" stroke="#840000" stroke-width="1"/>
<text transform="translate(576.6 586.35)" fill="#A90000" font-size="10.0" textLength="11.8" lengthAdjust="spacing" stroke="#A90000" stroke-width="0.12">12</text>
<text transform="translate(568 591.45) scale(0.88 1)" fill="#006464" font-size="10.0" text-anchor="end" textLength="42.7" lengthAdjust="spacing" stroke="#006464" stroke-width="0.18">GPIO33</text>
<line x1="572.5" y1="608.5" x2="586.5" y2="608.5" stroke="#840000" stroke-width="1"/>
<text transform="translate(576.6 607.49)" fill="#A90000" font-size="10.0" textLength="11.8" lengthAdjust="spacing" stroke="#A90000" stroke-width="0.12">13</text>
<text transform="translate(568 612.59) scale(0.88 1)" fill="#006464" font-size="10.0" text-anchor="end" textLength="42.7" lengthAdjust="spacing" stroke="#006464" stroke-width="0.18">GPIO32</text>
<line x1="572.5" y1="629.5" x2="586.5" y2="629.5" stroke="#840000" stroke-width="1"/>
<text transform="translate(576.6 628.63)" fill="#A90000" font-size="10.0" textLength="11.8" lengthAdjust="spacing" stroke="#A90000" stroke-width="0.12">14</text>
<text transform="translate(568 633.73) scale(0.88 1)" fill="#006464" font-size="10.0" text-anchor="end" textLength="79.8" lengthAdjust="spacing" stroke="#006464" stroke-width="0.18">Input/GPIO35</text>
<circle cx="586.5" cy="629.5" r="1.4" fill="none" stroke="#840000" stroke-width="0.8"/>
<line x1="572.5" y1="651.5" x2="586.5" y2="651.5" stroke="#840000" stroke-width="1"/>
<text transform="translate(576.6 649.77)" fill="#A90000" font-size="10.0" textLength="11.8" lengthAdjust="spacing" stroke="#A90000" stroke-width="0.12">15</text>
<text transform="translate(568 654.87) scale(0.88 1)" fill="#006464" font-size="10.0" text-anchor="end" textLength="79.8" lengthAdjust="spacing" stroke="#006464" stroke-width="0.18">Input/GPIO34</text>
<circle cx="586.5" cy="651.5" r="1.4" fill="none" stroke="#840000" stroke-width="0.8"/>
<line x1="572.5" y1="672.5" x2="586.5" y2="672.5" stroke="#840000" stroke-width="1"/>
<text transform="translate(576.6 670.92)" fill="#A90000" font-size="10.0" textLength="11.8" lengthAdjust="spacing" stroke="#A90000" stroke-width="0.12">16</text>
<text transform="translate(568 676.02) scale(0.88 1)" fill="#006464" font-size="10.0" text-anchor="end" textLength="79.8" lengthAdjust="spacing" stroke="#006464" stroke-width="0.18">Input/GPIO39</text>
<circle cx="586.5" cy="672.5" r="1.4" fill="none" stroke="#840000" stroke-width="0.8"/>
<line x1="572.5" y1="693.5" x2="586.5" y2="693.5" stroke="#840000" stroke-width="1"/>
<text transform="translate(576.6 692.06)" fill="#A90000" font-size="10.0" textLength="11.8" lengthAdjust="spacing" stroke="#A90000" stroke-width="0.12">17</text>
<text transform="translate(568 697.16) scale(0.88 1)" fill="#006464" font-size="10.0" text-anchor="end" textLength="79.8" lengthAdjust="spacing" stroke="#006464" stroke-width="0.18">Input/GPIO36</text>
<circle cx="586.5" cy="693.5" r="1.4" fill="none" stroke="#840000" stroke-width="0.8"/>
<line x1="572.5" y1="714.5" x2="586.5" y2="714.5" stroke="#840000" stroke-width="1"/>
<text transform="translate(576.6 713.2)" fill="#A90000" font-size="10.0" textLength="11.8" lengthAdjust="spacing" stroke="#A90000" stroke-width="0.12">18</text>
<text transform="translate(568 718.3) scale(0.88 1)" fill="#006464" font-size="10.0" text-anchor="end" textLength="64.8" lengthAdjust="spacing" stroke="#006464" stroke-width="0.18">Restart/EN</text>
<circle cx="586.5" cy="714.5" r="1.4" fill="none" stroke="#840000" stroke-width="0.8"/>
<line x1="572.5" y1="735.5" x2="586.5" y2="735.5" stroke="#840000" stroke-width="1"/>
<text transform="translate(576.6 734.35)" fill="#A90000" font-size="10.0" textLength="11.8" lengthAdjust="spacing" stroke="#A90000" stroke-width="0.12">19</text>
<text transform="translate(568 739.45) scale(0.88 1)" fill="#006464" font-size="10.0" text-anchor="end" textLength="20.5" lengthAdjust="spacing" stroke="#006464" stroke-width="0.18">3v3</text>
<circle cx="586.5" cy="735.5" r="1.4" fill="none" stroke="#840000" stroke-width="0.8"/>
<text transform="translate(487.8 308.5) scale(0.88 1)" fill="#006464" font-size="10.0" text-anchor="middle" textLength="13.6" lengthAdjust="spacing" stroke="#006464" stroke-width="0.18">U1</text>
<text transform="translate(488.3 323.5) scale(0.88 1)" fill="#006464" font-size="10.0" text-anchor="middle" textLength="156.8" lengthAdjust="spacing" stroke="#006464" stroke-width="0.18">ESP32–WROOM–NODEMCU</text>
<line x1="593.5" y1="340.5" x2="593.5" y2="326.5" stroke="#840000" stroke-width="1"/>
<polyline points="589,333.5 593.5,326.5 598.1,333.5" stroke="#840000" stroke-width="1" fill="none"/>
<text transform="translate(594.08 316.48)" fill="#006464" font-size="10.0" text-anchor="middle" textLength="21.3" lengthAdjust="spacing" stroke="#006464" stroke-width="0.18">+5V</text>
<polyline points="297.5,665.5 312.5,665.5 312.5,644.5" stroke="#009600" stroke-width="1" fill="none"/>
<polyline points="297.5,679.5 354.5,679.5 354.5,629.5 389.5,629.5" stroke="#009600" stroke-width="1" fill="none"/>
<polyline points="297.5,693.5 389.5,693.5" stroke="#009600" stroke-width="1" fill="none"/>
<polyline points="297.5,707.5 312.5,707.5 312.5,735.5 389.5,735.5" stroke="#009600" stroke-width="1" fill="none"/>
<polyline points="375.5,735.5 375.5,763.5" stroke="#009600" stroke-width="1" fill="none"/>
<polyline points="389.5,714.5 333.5,714.5 333.5,862.5 410.5,862.5" stroke="#009600" stroke-width="1" fill="none"/>
<circle cx="375.5" cy="735.5" r="2.7" fill="#009600"/>
<line x1="269.5" y1="665.5" x2="297.5" y2="665.5" stroke="#840000" stroke-width="1"/>
<rect x="269" y="664" width="5" height="2" fill="#840000"/>
<text transform="translate(287.3 663.87)" fill="#A90000" font-size="10.0" text-anchor="middle" textLength="5.6" lengthAdjust="spacing" stroke="#A90000" stroke-width="0.12">1</text>
<line x1="269.5" y1="679.5" x2="297.5" y2="679.5" stroke="#840000" stroke-width="1"/>
<rect x="269" y="678" width="5" height="2" fill="#840000"/>
<text transform="translate(287.3 677.96)" fill="#A90000" font-size="10.0" text-anchor="middle" textLength="5.6" lengthAdjust="spacing" stroke="#A90000" stroke-width="0.12">2</text>
<line x1="269.5" y1="693.5" x2="297.5" y2="693.5" stroke="#840000" stroke-width="1"/>
<rect x="269" y="692" width="5" height="2" fill="#840000"/>
<text transform="translate(287.3 692.06)" fill="#A90000" font-size="10.0" text-anchor="middle" textLength="5.6" lengthAdjust="spacing" stroke="#A90000" stroke-width="0.12">3</text>
<line x1="269.5" y1="707.5" x2="297.5" y2="707.5" stroke="#840000" stroke-width="1"/>
<rect x="269" y="706" width="5" height="2" fill="#840000"/>
<text transform="translate(287.3 706.15)" fill="#A90000" font-size="10.0" text-anchor="middle" textLength="5.6" lengthAdjust="spacing" stroke="#A90000" stroke-width="0.12">4</text>
<text transform="translate(261.4 682.5) scale(0.88 1)" fill="#006464" font-size="10.0" text-anchor="end" textLength="96.0" lengthAdjust="spacing" stroke="#006464" stroke-width="0.18">Conn_01x04_Pin</text>
<text transform="translate(261.4 696.9) scale(0.88 1)" fill="#006464" font-size="10.0" text-anchor="end" textLength="13.1" lengthAdjust="spacing" stroke="#006464" stroke-width="0.18">J6</text>
<line x1="312.5" y1="644.5" x2="312.5" y2="629.5" stroke="#840000" stroke-width="1"/>
<polyline points="308,636.5 312.5,629.5 317.1,636.5" stroke="#840000" stroke-width="1" fill="none"/>
<text transform="translate(312.18 619.53)" fill="#006464" font-size="10.0" text-anchor="middle" textLength="21.3" lengthAdjust="spacing" stroke="#006464" stroke-width="0.18">+5V</text>
<line x1="375.5" y1="763.5" x2="375.5" y2="770.5" stroke="#840000" stroke-width="1"/>
<polygon points="368.5,770.5 382.5,770.5 375.5,777.5" stroke="#840000" stroke-width="1" fill="none"/>
<text transform="translate(375.31 796.04) scale(0.88 1)" fill="#006464" font-size="10.0" text-anchor="middle" textLength="23.1" lengthAdjust="spacing" stroke="#006464" stroke-width="0.18">GND</text>
<polyline points="495.5,827.5 495.5,799.5" stroke="#009600" stroke-width="1" fill="none"/>
<polyline points="481.5,925.5 481.5,940.5" stroke="#009600" stroke-width="1" fill="none"/>
<rect x="424.5" y="841.5" width="134" height="70" stroke="#840000" stroke-width="1" fill="none"/>
<circle cx="530.5" cy="876.5" r="20.2" fill="none" stroke="#840000" stroke-width="1"/>
<line x1="410.5" y1="862.5" x2="424.5" y2="862.5" stroke="#840000" stroke-width="1"/>
<line x1="410.5" y1="890.5" x2="424.5" y2="890.5" stroke="#840000" stroke-width="1"/>
<line x1="467.5" y1="841.5" x2="467.5" y2="827.5" stroke="#840000" stroke-width="1"/>
<line x1="495.5" y1="841.5" x2="495.5" y2="827.5" stroke="#840000" stroke-width="1"/>
<line x1="481.5" y1="911.5" x2="481.5" y2="925.5" stroke="#840000" stroke-width="1"/>
<circle cx="410.5" cy="890.5" r="1.4" fill="none" stroke="#840000" stroke-width="0.8"/>
<circle cx="467.5" cy="827.5" r="1.4" fill="none" stroke="#840000" stroke-width="0.8"/>
<text transform="translate(418 861.4)" fill="#A90000" font-size="10.0" text-anchor="middle" textLength="5.6" lengthAdjust="spacing" stroke="#A90000" stroke-width="0.12">3</text>
<text transform="translate(418 889.3)" fill="#A90000" font-size="10.0" text-anchor="middle" textLength="5.6" lengthAdjust="spacing" stroke="#A90000" stroke-width="0.12">5</text>
<text transform="translate(466 834) rotate(-90)" fill="#A90000" font-size="10.0" text-anchor="middle" textLength="5.6" lengthAdjust="spacing" stroke="#A90000" stroke-width="0.12">1</text>
<text transform="translate(494 834) rotate(-90)" fill="#A90000" font-size="10.0" text-anchor="middle" textLength="5.6" lengthAdjust="spacing" stroke="#A90000" stroke-width="0.12">4</text>
<text transform="translate(480 918.5) rotate(-90)" fill="#A90000" font-size="10.0" text-anchor="middle" textLength="5.6" lengthAdjust="spacing" stroke="#A90000" stroke-width="0.12">2</text>
<text transform="translate(430 865.8) scale(0.88 1)" fill="#006464" font-size="10.0" textLength="21.6" lengthAdjust="spacing" stroke="#006464" stroke-width="0.18">OUT</text>
<text transform="translate(430 893.7) scale(0.88 1)" fill="#006464" font-size="10.0" textLength="21.6" lengthAdjust="spacing" stroke="#006464" stroke-width="0.18">CDS</text>
<text transform="translate(470.5 855) rotate(-90) scale(0.88 1)" fill="#006464" font-size="10.0" text-anchor="middle" textLength="21.0" lengthAdjust="spacing" stroke="#006464" stroke-width="0.18">3V3</text>
<text transform="translate(498.6 854.3) rotate(-90) scale(0.88 1)" fill="#006464" font-size="10.0" text-anchor="middle" textLength="17.6" lengthAdjust="spacing" stroke="#006464" stroke-width="0.18">VIN</text>
<text transform="translate(484.3 896.5) rotate(-90) scale(0.88 1)" fill="#006464" font-size="10.0" text-anchor="middle" textLength="22.3" lengthAdjust="spacing" stroke="#006464" stroke-width="0.18">GND</text>
<text transform="translate(567.8 876.9) scale(0.88 1)" fill="#006464" font-size="10.0" textLength="13.6" lengthAdjust="spacing" stroke="#006464" stroke-width="0.18">U3</text>
<line x1="495.5" y1="799.5" x2="495.5" y2="784.5" stroke="#840000" stroke-width="1"/>
<polyline points="491,792.5 495.5,784.5 500.1,792.5" stroke="#840000" stroke-width="1" fill="none"/>
<text transform="translate(495.42 774.57)" fill="#006464" font-size="10.0" text-anchor="middle" textLength="21.3" lengthAdjust="spacing" stroke="#006464" stroke-width="0.18">+5V</text>
<line x1="481.5" y1="940.5" x2="481.5" y2="947.5" stroke="#840000" stroke-width="1"/>
<polygon points="474.5,947.5 488.5,947.5 481.5,954.5" stroke="#840000" stroke-width="1" fill="none"/>
<text transform="translate(481.02 972.23) scale(0.88 1)" fill="#006464" font-size="10.0" text-anchor="middle" textLength="23.1" lengthAdjust="spacing" stroke="#006464" stroke-width="0.18">GND</text>
<polyline points="960.5,277.5 946.5,277.5 946.5,284.5" stroke="#009600" stroke-width="1" fill="none"/>
<line x1="960.5" y1="249.5" x2="974.5" y2="249.5" stroke="#840000" stroke-width="1"/>
<line x1="960.5" y1="277.5" x2="974.5" y2="277.5" stroke="#840000" stroke-width="1"/>
<line x1="974.5" y1="245.5" x2="974.5" y2="281.5" stroke="#840000" stroke-width="1"/>
<path d="M 974.5 245.5 A 18 18 0 0 1 974.5 281.5" fill="none" stroke="#840000" stroke-width="1"/>
<text transform="translate(966.5 248.7)" fill="#A90000" font-size="10.0" text-anchor="middle" textLength="5.6" lengthAdjust="spacing" stroke="#A90000" stroke-width="0.12">1</text>
<text transform="translate(967.2 276.6)" fill="#A90000" font-size="10.0" text-anchor="middle" textLength="5.6" lengthAdjust="spacing" stroke="#A90000" stroke-width="0.12">2</text>
<line x1="964.7" y1="252.5" x2="968.5" y2="252.5" stroke="#840000" stroke-width="1"/>
<line x1="966.6" y1="250.5" x2="966.6" y2="254.5" stroke="#840000" stroke-width="1"/>
<text transform="translate(996.5 259.8) scale(0.88 1)" fill="#006464" font-size="10.0" textLength="22.2" lengthAdjust="spacing" stroke="#006464" stroke-width="0.18">BZ1</text>
<text transform="translate(996.5 273.9) scale(0.88 1)" fill="#006464" font-size="10.0" textLength="39.2" lengthAdjust="spacing" stroke="#006464" stroke-width="0.18">Buzzer</text>
<line x1="946.5" y1="284.5" x2="946.5" y2="291.5" stroke="#840000" stroke-width="1"/>
<polygon points="939.5,291.5 953.5,291.5 946.5,298.5" stroke="#840000" stroke-width="1" fill="none"/>
<text transform="translate(946.16 316.8) scale(0.88 1)" fill="#006464" font-size="10.0" text-anchor="middle" textLength="23.1" lengthAdjust="spacing" stroke="#006464" stroke-width="0.18">GND</text>
<polyline points="995.5,369.5 981.5,369.5 981.5,742.5" stroke="#009600" stroke-width="1" fill="none"/>
<polyline points="981.5,432.5 995.5,432.5" stroke="#009600" stroke-width="1" fill="none"/>
<circle cx="981.5" cy="432.5" r="2.7" fill="#009600"/>
<polyline points="981.5,510.5 995.5,510.5" stroke="#009600" stroke-width="1" fill="none"/>
<circle cx="981.5" cy="510.5" r="2.7" fill="#009600"/>
<polyline points="981.5,587.5 995.5,587.5" stroke="#009600" stroke-width="1" fill="none"/>
<circle cx="981.5" cy="587.5" r="2.7" fill="#009600"/>
<polyline points="981.5,665.5 995.5,665.5" stroke="#009600" stroke-width="1" fill="none"/>
<circle cx="981.5" cy="665.5" r="2.7" fill="#009600"/>
<line x1="925.5" y1="397.5" x2="932.5" y2="397.5" stroke="#840000" stroke-width="1"/>
<line x1="960.5" y1="397.5" x2="967.5" y2="397.5" stroke="#840000" stroke-width="1"/>
<rect x="932.5" y="391.5" width="28" height="12" stroke="#840000" stroke-width="1" fill="none"/>
<text transform="translate(946.36 365.56) scale(0.88 1)" fill="#006464" font-size="10.0" text-anchor="middle" textLength="13.6" lengthAdjust="spacing" stroke="#006464" stroke-width="0.18">R1</text>
<text transform="translate(946.36 379.46) scale(0.88 1)" fill="#006464" font-size="10.0" text-anchor="middle" textLength="6.8" lengthAdjust="spacing" stroke="#006464" stroke-width="0.18">R</text>
<line x1="925.5" y1="460.5" x2="932.5" y2="460.5" stroke="#840000" stroke-width="1"/>
<line x1="960.5" y1="460.5" x2="967.5" y2="460.5" stroke="#840000" stroke-width="1"/>
<rect x="932.5" y="455.5" width="28" height="11" stroke="#840000" stroke-width="1" fill="none"/>
<text transform="translate(946.36 428.99) scale(0.88 1)" fill="#006464" font-size="10.0" text-anchor="middle" textLength="13.6" lengthAdjust="spacing" stroke="#006464" stroke-width="0.18">R2</text>
<text transform="translate(946.36 442.89) scale(0.88 1)" fill="#006464" font-size="10.0" text-anchor="middle" textLength="6.8" lengthAdjust="spacing" stroke="#006464" stroke-width="0.18">R</text>
<line x1="925.5" y1="538.5" x2="932.5" y2="538.5" stroke="#840000" stroke-width="1"/>
<line x1="960.5" y1="538.5" x2="967.5" y2="538.5" stroke="#840000" stroke-width="1"/>
<rect x="932.5" y="532.5" width="28" height="11" stroke="#840000" stroke-width="1" fill="none"/>
<text transform="translate(946.36 506.51) scale(0.88 1)" fill="#006464" font-size="10.0" text-anchor="middle" textLength="13.6" lengthAdjust="spacing" stroke="#006464" stroke-width="0.18">R3</text>
<text transform="translate(946.36 520.41) scale(0.88 1)" fill="#006464" font-size="10.0" text-anchor="middle" textLength="6.8" lengthAdjust="spacing" stroke="#006464" stroke-width="0.18">R</text>
<line x1="925.5" y1="615.5" x2="932.5" y2="615.5" stroke="#840000" stroke-width="1"/>
<line x1="960.5" y1="615.5" x2="967.5" y2="615.5" stroke="#840000" stroke-width="1"/>
<rect x="932.5" y="610.5" width="28" height="11" stroke="#840000" stroke-width="1" fill="none"/>
<text transform="translate(946.36 584.04) scale(0.88 1)" fill="#006464" font-size="10.0" text-anchor="middle" textLength="13.6" lengthAdjust="spacing" stroke="#006464" stroke-width="0.18">R4</text>
<text transform="translate(946.36 597.94) scale(0.88 1)" fill="#006464" font-size="10.0" text-anchor="middle" textLength="6.8" lengthAdjust="spacing" stroke="#006464" stroke-width="0.18">R</text>
<line x1="925.5" y1="693.5" x2="932.5" y2="693.5" stroke="#840000" stroke-width="1"/>
<line x1="960.5" y1="693.5" x2="967.5" y2="693.5" stroke="#840000" stroke-width="1"/>
<rect x="932.5" y="687.5" width="28" height="11" stroke="#840000" stroke-width="1" fill="none"/>
<text transform="translate(946.36 661.56) scale(0.88 1)" fill="#006464" font-size="10.0" text-anchor="middle" textLength="13.6" lengthAdjust="spacing" stroke="#006464" stroke-width="0.18">R5</text>
<text transform="translate(946.36 675.46) scale(0.88 1)" fill="#006464" font-size="10.0" text-anchor="middle" textLength="6.8" lengthAdjust="spacing" stroke="#006464" stroke-width="0.18">R</text>
<line x1="995.5" y1="369.5" x2="1023.5" y2="369.5" stroke="#840000" stroke-width="1"/>
<rect x="1019" y="368" width="5" height="2" fill="#840000"/>
<text transform="translate(1006 367.87)" fill="#A90000" font-size="10.0" text-anchor="middle" textLength="5.6" lengthAdjust="spacing" stroke="#A90000" stroke-width="0.12">3</text>
<line x1="995.5" y1="383.5" x2="1023.5" y2="383.5" stroke="#840000" stroke-width="1"/>
<rect x="1019" y="382" width="5" height="2" fill="#840000"/>
<text transform="translate(1006 381.97)" fill="#A90000" font-size="10.0" text-anchor="middle" textLength="5.6" lengthAdjust="spacing" stroke="#A90000" stroke-width="0.12">2</text>
<line x1="995.5" y1="397.5" x2="1023.5" y2="397.5" stroke="#840000" stroke-width="1"/>
<rect x="1019" y="396" width="5" height="2" fill="#840000"/>
<text transform="translate(1006 396.06)" fill="#A90000" font-size="10.0" text-anchor="middle" textLength="5.6" lengthAdjust="spacing" stroke="#A90000" stroke-width="0.12">1</text>
<text transform="translate(1031.8 379.47) scale(0.88 1)" fill="#006464" font-size="10.0" textLength="12.5" lengthAdjust="spacing" stroke="#006464" stroke-width="0.18">J9</text>
<text transform="translate(1031.8 393.56) scale(0.88 1)" fill="#006464" font-size="10.0" textLength="97.3" lengthAdjust="spacing" stroke="#006464" stroke-width="0.18">Conn_01x03_Pin</text>
<line x1="995.5" y1="432.5" x2="1023.5" y2="432.5" stroke="#840000" stroke-width="1"/>
<rect x="1019" y="431" width="5" height="2" fill="#840000"/>
<text transform="translate(1006 431.3)" fill="#A90000" font-size="10.0" text-anchor="middle" textLength="5.6" lengthAdjust="spacing" stroke="#A90000" stroke-width="0.12">3</text>
<line x1="995.5" y1="446.5" x2="1023.5" y2="446.5" stroke="#840000" stroke-width="1"/>
<rect x="1019" y="445" width="5" height="2" fill="#840000"/>
<text transform="translate(1006 445.39)" fill="#A90000" font-size="10.0" text-anchor="middle" textLength="5.6" lengthAdjust="spacing" stroke="#A90000" stroke-width="0.12">2</text>
<line x1="995.5" y1="460.5" x2="1023.5" y2="460.5" stroke="#840000" stroke-width="1"/>
<rect x="1019" y="459" width="5" height="2" fill="#840000"/>
<text transform="translate(1006 459.49)" fill="#A90000" font-size="10.0" text-anchor="middle" textLength="5.6" lengthAdjust="spacing" stroke="#A90000" stroke-width="0.12">1</text>
<text transform="translate(1031.8 442.89) scale(0.88 1)" fill="#006464" font-size="10.0" textLength="19.3" lengthAdjust="spacing" stroke="#006464" stroke-width="0.18">J10</text>
<text transform="translate(1031.8 456.99) scale(0.88 1)" fill="#006464" font-size="10.0" textLength="97.3" lengthAdjust="spacing" stroke="#006464" stroke-width="0.18">Conn_01x03_Pin</text>
<line x1="995.5" y1="510.5" x2="1023.5" y2="510.5" stroke="#840000" stroke-width="1"/>
<rect x="1019" y="509" width="5" height="2" fill="#840000"/>
<text transform="translate(1006 508.82)" fill="#A90000" font-size="10.0" text-anchor="middle" textLength="5.6" lengthAdjust="spacing" stroke="#A90000" stroke-width="0.12">3</text>
<line x1="995.5" y1="524.5" x2="1023.5" y2="524.5" stroke="#840000" stroke-width="1"/>
<rect x="1019" y="523" width="5" height="2" fill="#840000"/>
<text transform="translate(1006 522.92)" fill="#A90000" font-size="10.0" text-anchor="middle" textLength="5.6" lengthAdjust="spacing" stroke="#A90000" stroke-width="0.12">2</text>
<line x1="995.5" y1="538.5" x2="1023.5" y2="538.5" stroke="#840000" stroke-width="1"/>
<rect x="1019" y="537" width="5" height="2" fill="#840000"/>
<text transform="translate(1006 537.01)" fill="#A90000" font-size="10.0" text-anchor="middle" textLength="5.6" lengthAdjust="spacing" stroke="#A90000" stroke-width="0.12">1</text>
<text transform="translate(1031.8 520.42) scale(0.88 1)" fill="#006464" font-size="10.0" textLength="19.3" lengthAdjust="spacing" stroke="#006464" stroke-width="0.18">J11</text>
<text transform="translate(1031.8 534.51) scale(0.88 1)" fill="#006464" font-size="10.0" textLength="97.3" lengthAdjust="spacing" stroke="#006464" stroke-width="0.18">Conn_01x03_Pin</text>
<line x1="995.5" y1="587.5" x2="1023.5" y2="587.5" stroke="#840000" stroke-width="1"/>
<rect x="1019" y="586" width="5" height="2" fill="#840000"/>
<text transform="translate(1006 586.35)" fill="#A90000" font-size="10.0" text-anchor="middle" textLength="5.6" lengthAdjust="spacing" stroke="#A90000" stroke-width="0.12">3</text>
<line x1="995.5" y1="601.5" x2="1023.5" y2="601.5" stroke="#840000" stroke-width="1"/>
<rect x="1019" y="600" width="5" height="2" fill="#840000"/>
<text transform="translate(1006 600.44)" fill="#A90000" font-size="10.0" text-anchor="middle" textLength="5.6" lengthAdjust="spacing" stroke="#A90000" stroke-width="0.12">2</text>
<line x1="995.5" y1="615.5" x2="1023.5" y2="615.5" stroke="#840000" stroke-width="1"/>
<rect x="1019" y="614" width="5" height="2" fill="#840000"/>
<text transform="translate(1006 614.54)" fill="#A90000" font-size="10.0" text-anchor="middle" textLength="5.6" lengthAdjust="spacing" stroke="#A90000" stroke-width="0.12">1</text>
<text transform="translate(1031.8 597.94) scale(0.88 1)" fill="#006464" font-size="10.0" textLength="19.3" lengthAdjust="spacing" stroke="#006464" stroke-width="0.18">J12</text>
<text transform="translate(1031.8 612.04) scale(0.88 1)" fill="#006464" font-size="10.0" textLength="97.3" lengthAdjust="spacing" stroke="#006464" stroke-width="0.18">Conn_01x03_Pin</text>
<line x1="995.5" y1="665.5" x2="1023.5" y2="665.5" stroke="#840000" stroke-width="1"/>
<rect x="1019" y="664" width="5" height="2" fill="#840000"/>
<text transform="translate(1006 663.87)" fill="#A90000" font-size="10.0" text-anchor="middle" textLength="5.6" lengthAdjust="spacing" stroke="#A90000" stroke-width="0.12">3</text>
<line x1="995.5" y1="679.5" x2="1023.5" y2="679.5" stroke="#840000" stroke-width="1"/>
<rect x="1019" y="678" width="5" height="2" fill="#840000"/>
<text transform="translate(1006 677.96)" fill="#A90000" font-size="10.0" text-anchor="middle" textLength="5.6" lengthAdjust="spacing" stroke="#A90000" stroke-width="0.12">2</text>
<line x1="995.5" y1="693.5" x2="1023.5" y2="693.5" stroke="#840000" stroke-width="1"/>
<rect x="1019" y="692" width="5" height="2" fill="#840000"/>
<text transform="translate(1006 692.06)" fill="#A90000" font-size="10.0" text-anchor="middle" textLength="5.6" lengthAdjust="spacing" stroke="#A90000" stroke-width="0.12">1</text>
<text transform="translate(1031.8 675.46) scale(0.88 1)" fill="#006464" font-size="10.0" textLength="19.3" lengthAdjust="spacing" stroke="#006464" stroke-width="0.18">J13</text>
<text transform="translate(1031.8 689.56) scale(0.88 1)" fill="#006464" font-size="10.0" textLength="97.3" lengthAdjust="spacing" stroke="#006464" stroke-width="0.18">Conn_01x03_Pin</text>
<line x1="981.5" y1="742.5" x2="981.5" y2="749.5" stroke="#840000" stroke-width="1"/>
<polygon points="974.5,749.5 988.5,749.5 981.5,756.5" stroke="#840000" stroke-width="1" fill="none"/>
<text transform="translate(981.4 774.89) scale(0.88 1)" fill="#006464" font-size="10.0" text-anchor="middle" textLength="23.1" lengthAdjust="spacing" stroke="#006464" stroke-width="0.18">GND</text>
<rect x="1200.5" y="37.5" width="281" height="205" stroke="#000084" stroke-width="1" fill="none"/>
<text transform="translate(1206.7 50.8) scale(0.88 1)" fill="#000084" font-size="10.0" textLength="110.8" lengthAdjust="spacing" stroke="#000084" stroke-width="0.18">Screen Connection</text>
<polyline points="1263.5,129.5 1263.5,66.5 1235.5,66.5" stroke="#009600" stroke-width="1" fill="none"/>
<polyline points="1263.5,143.5 1284.5,143.5" stroke="#009600" stroke-width="1" fill="none"/>
<polyline points="1263.5,157.5 1284.5,157.5" stroke="#009600" stroke-width="1" fill="none"/>
<polyline points="1263.5,171.5 1263.5,214.5 1235.5,214.5" stroke="#009600" stroke-width="1" fill="none"/>
<rect x="1228.5" y="122.5" width="14" height="56" stroke="#840000" stroke-width="1" fill="#FFFFC2"/>
<line x1="1242.5" y1="129.5" x2="1263.5" y2="129.5" stroke="#840000" stroke-width="1"/>
<rect x="1235.5" y="128.5" width="7" height="2" stroke="#840000" stroke-width="1" fill="none"/>
<text transform="translate(1252.5 128.05)" fill="#A90000" font-size="10.0" text-anchor="middle" textLength="5.6" lengthAdjust="spacing" stroke="#A90000" stroke-width="0.12">4</text>
<line x1="1242.5" y1="143.5" x2="1263.5" y2="143.5" stroke="#840000" stroke-width="1"/>
<rect x="1235.5" y="142.5" width="7" height="2" stroke="#840000" stroke-width="1" fill="none"/>
<text transform="translate(1252.5 142.15)" fill="#A90000" font-size="10.0" text-anchor="middle" textLength="5.6" lengthAdjust="spacing" stroke="#A90000" stroke-width="0.12">3</text>
<line x1="1242.5" y1="157.5" x2="1263.5" y2="157.5" stroke="#840000" stroke-width="1"/>
<rect x="1235" y="156" width="8" height="2" fill="#840000"/>
<text transform="translate(1252.5 156.24)" fill="#A90000" font-size="10.0" text-anchor="middle" textLength="5.6" lengthAdjust="spacing" stroke="#A90000" stroke-width="0.12">2</text>
<line x1="1242.5" y1="171.5" x2="1263.5" y2="171.5" stroke="#840000" stroke-width="1"/>
<rect x="1235" y="170" width="8" height="2" fill="#840000"/>
<text transform="translate(1252.5 170.34)" fill="#A90000" font-size="10.0" text-anchor="middle" textLength="5.6" lengthAdjust="spacing" stroke="#A90000" stroke-width="0.12">1</text>
<text transform="translate(1203.5 111.7) scale(0.88 1)" fill="#006464" font-size="10.0" textLength="72.2" lengthAdjust="spacing" stroke="#006464" stroke-width="0.18">Conn_01x04</text>
<line x1="1235.5" y1="66.5" x2="1235.5" y2="73.5" stroke="#840000" stroke-width="1"/>
<polygon points="1228.5,73.5 1242.5,73.5 1235.5,80.5" stroke="#840000" stroke-width="1" fill="none"/>
<text transform="translate(1235.11 98.32) scale(0.88 1)" fill="#006464" font-size="10.0" text-anchor="middle" textLength="23.1" lengthAdjust="spacing" stroke="#006464" stroke-width="0.18">GND</text>
<line x1="1235.5" y1="214.5" x2="1235.5" y2="200.5" stroke="#840000" stroke-width="1"/>
<polyline points="1231,207.5 1235.5,200.5 1240.1,207.5" stroke="#840000" stroke-width="1" fill="none"/>
<text transform="translate(1235.41 189.62)" fill="#006464" font-size="10.0" text-anchor="middle" textLength="21.3" lengthAdjust="spacing" stroke="#006464" stroke-width="0.18">+5V</text>
<rect x="1312.5" y="101.5" width="113" height="99" stroke="#840000" stroke-width="1" fill="#FFFFC2"/>
<line x1="1284.5" y1="143.5" x2="1312.5" y2="143.5" stroke="#840000" stroke-width="1"/>
<line x1="1284.5" y1="157.5" x2="1312.5" y2="157.5" stroke="#840000" stroke-width="1"/>
<line x1="1425.5" y1="115.5" x2="1453.5" y2="115.5" stroke="#840000" stroke-width="1"/>
<line x1="1425.5" y1="185.5" x2="1453.5" y2="185.5" stroke="#840000" stroke-width="1"/>
<polyline points="1312.5,140.8 1316,143.5 1312.5,146.2" stroke="#840000" stroke-width="1" fill="none"/>
<circle cx="1453.5" cy="115.5" r="1.4" fill="none" stroke="#840000" stroke-width="0.8"/>
<circle cx="1453.5" cy="185.5" r="1.4" fill="none" stroke="#840000" stroke-width="0.8"/>
<text transform="translate(1298.3 141.65)" fill="#A90000" font-size="9" text-anchor="middle" textLength="5.0" lengthAdjust="spacing" stroke="#A90000" stroke-width="0.18">3</text>
<text transform="translate(1298.3 155.74)" fill="#A90000" font-size="9" text-anchor="middle" textLength="5.0" lengthAdjust="spacing" stroke="#A90000" stroke-width="0.18">4</text>
<text transform="translate(1439.6 114.46)" fill="#A90000" font-size="9" text-anchor="middle" textLength="4.4" lengthAdjust="spacing" stroke="#A90000" stroke-width="0.18">1</text>
<text transform="translate(1440.6 186.13)" fill="#A90000" font-size="10.0" text-anchor="middle" textLength="5.6" lengthAdjust="spacing" stroke="#A90000" stroke-width="0.12">2</text>
<text transform="translate(1319.6 147.05) scale(0.72 1)" fill="#006464" font-size="10.0" textLength="23.2" lengthAdjust="spacing" stroke="#006464" stroke-width="0.18">SCK</text>
<text transform="translate(1319.6 161.14) scale(0.72 1)" fill="#006464" font-size="10.0" textLength="23.2" lengthAdjust="spacing" stroke="#006464" stroke-width="0.18">SDA</text>
<text transform="translate(1418.1 118.86) scale(0.72 1)" fill="#006464" font-size="10.0" text-anchor="end" textLength="22.2" lengthAdjust="spacing" stroke="#006464" stroke-width="0.18">VDD</text>
<text transform="translate(1418.1 189.33) scale(0.72 1)" fill="#006464" font-size="10.0" text-anchor="end" textLength="22.2" lengthAdjust="spacing" stroke="#006464" stroke-width="0.18">GND</text>
<text transform="translate(1369.6 76.9) scale(0.88 1)" fill="#006464" font-size="10.0" text-anchor="middle" textLength="23.2" lengthAdjust="spacing" stroke="#006464" stroke-width="0.18">DS2</text>
<text transform="translate(1369.6 90.8) scale(0.88 1)" fill="#006464" font-size="10.0" text-anchor="middle" textLength="131.8" lengthAdjust="spacing" stroke="#006464" stroke-width="0.18">OLED_128X64_1.3_I2C</text>
<polyline points="1319.5,369.5 1319.5,742.5 1439.5,742.5" stroke="#009600" stroke-width="1" fill="none"/>
<polyline points="1439.5,383.5 1439.5,756.5" stroke="#009600" stroke-width="1" fill="none"/>
<circle cx="1439.5" cy="742.5" r="2.7" fill="#009600"/>
<polyline points="1305.5,369.5 1319.5,369.5" stroke="#009600" stroke-width="1" fill="none"/>
<polyline points="1305.5,383.5 1341.5,383.5" stroke="#009600" stroke-width="1" fill="none"/>
<polyline points="1305.5,397.5 1341.5,397.5" stroke="#009600" stroke-width="1" fill="none"/>
<polyline points="1397.5,383.5 1439.5,383.5" stroke="#009600" stroke-width="1" fill="none"/>
<polyline points="1397.5,397.5 1439.5,397.5" stroke="#009600" stroke-width="1" fill="none"/>
<circle cx="1439.5" cy="397.5" r="2.7" fill="#009600"/>
<line x1="1277.5" y1="369.5" x2="1305.5" y2="369.5" stroke="#840000" stroke-width="1"/>
<rect x="1277" y="368" width="5" height="2" fill="#840000"/>
<text transform="translate(1294.8 367.67)" fill="#A90000" font-size="10.0" text-anchor="middle" textLength="5.6" lengthAdjust="spacing" stroke="#A90000" stroke-width="0.12">3</text>
<line x1="1277.5" y1="383.5" x2="1305.5" y2="383.5" stroke="#840000" stroke-width="1"/>
<rect x="1277" y="382" width="5" height="2" fill="#840000"/>
<text transform="translate(1294.8 381.77)" fill="#A90000" font-size="10.0" text-anchor="middle" textLength="5.6" lengthAdjust="spacing" stroke="#A90000" stroke-width="0.12">2</text>
<line x1="1277.5" y1="397.5" x2="1305.5" y2="397.5" stroke="#840000" stroke-width="1"/>
<rect x="1277" y="396" width="5" height="2" fill="#840000"/>
<text transform="translate(1294.8 395.86)" fill="#A90000" font-size="10.0" text-anchor="middle" textLength="5.6" lengthAdjust="spacing" stroke="#A90000" stroke-width="0.12">1</text>
<text transform="translate(1269.4 379.57) scale(0.88 1)" fill="#006464" font-size="10.0" text-anchor="end" textLength="13.1" lengthAdjust="spacing" stroke="#006464" stroke-width="0.18">J5</text>
<text transform="translate(1269.4 393.66) scale(0.88 1)" fill="#006464" font-size="10.0" text-anchor="end" textLength="97.3" lengthAdjust="spacing" stroke="#006464" stroke-width="0.18">Conn_01x03_Pin</text>
<rect x="1351.5" y="365.5" width="35" height="46" stroke="#840000" stroke-width="1" fill="#FFFFC2"/>
<line x1="1355.5" y1="376.5" x2="1383.5" y2="376.5" stroke="#840000" stroke-width="1"/>
<line x1="1369.5" y1="365.5" x2="1369.5" y2="376.5" stroke="#840000" stroke-width="1"/>
<circle cx="1357.5" cy="383.5" r="3" fill="none" stroke="#840000" stroke-width="1"/>
<circle cx="1380.5" cy="383.5" r="3" fill="none" stroke="#840000" stroke-width="1"/>
<line x1="1341.5" y1="383.5" x2="1354.5" y2="383.5" stroke="#840000" stroke-width="1"/>
<line x1="1383.5" y1="383.5" x2="1397.5" y2="383.5" stroke="#840000" stroke-width="1"/>
<line x1="1341.5" y1="397.5" x2="1397.5" y2="397.5" stroke="#840000" stroke-width="1"/>
<polygon points="1362,390.5 1372.5,397.5 1362,404.5" stroke="#840000" stroke-width="1" fill="#840000"/>
<line x1="1372.5" y1="390.5" x2="1372.5" y2="404.5" stroke="#840000" stroke-width="1"/>
<line x1="1367.1" y1="401.6" x2="1374.5" y2="409.5" stroke="#840000" stroke-width="1"/>
<line x1="1370.5" y1="409.5" x2="1374.5" y2="409.5" stroke="#840000" stroke-width="1"/>
<line x1="1373.5" y1="406" x2="1373.5" y2="409.5" stroke="#840000" stroke-width="1"/>
<line x1="1374.3" y1="402.18" x2="1381.7" y2="409.5" stroke="#840000" stroke-width="1"/>
<line x1="1378.5" y1="409.5" x2="1381.7" y2="409.5" stroke="#840000" stroke-width="1"/>
<line x1="1381.5" y1="406" x2="1381.5" y2="409.5" stroke="#840000" stroke-width="1"/>
<text transform="translate(1347.9 381.77)" fill="#A90000" font-size="10.0" text-anchor="middle" textLength="5.6" lengthAdjust="spacing" stroke="#A90000" stroke-width="0.12">2</text>
<text transform="translate(1347.9 395.86)" fill="#A90000" font-size="10.0" text-anchor="middle" textLength="5.6" lengthAdjust="spacing" stroke="#A90000" stroke-width="0.12">4</text>
<text transform="translate(1390.6 381.77)" fill="#A90000" font-size="10.0" text-anchor="middle" textLength="5.6" lengthAdjust="spacing" stroke="#A90000" stroke-width="0.12">1</text>
<text transform="translate(1390.6 395.86)" fill="#A90000" font-size="10.0" text-anchor="middle" textLength="5.6" lengthAdjust="spacing" stroke="#A90000" stroke-width="0.12">3</text>
<text transform="translate(1369.4 344.17) scale(0.88 1)" fill="#006464" font-size="10.0" text-anchor="middle" textLength="22.2" lengthAdjust="spacing" stroke="#006464" stroke-width="0.18">SW5</text>
<text transform="translate(1369.4 358.37) scale(0.88 1)" fill="#006464" font-size="10.0" text-anchor="middle" textLength="78.0" lengthAdjust="spacing" stroke="#006464" stroke-width="0.18">SW_Push_LED</text>
<polyline points="1305.5,446.5 1319.5,446.5" stroke="#009600" stroke-width="1" fill="none"/>
<circle cx="1319.5" cy="446.5" r="2.7" fill="#009600"/>
<polyline points="1305.5,460.5 1341.5,460.5" stroke="#009600" stroke-width="1" fill="none"/>
<polyline points="1305.5,474.5 1341.5,474.5" stroke="#009600" stroke-width="1" fill="none"/>
<polyline points="1397.5,460.5 1439.5,460.5" stroke="#009600" stroke-width="1" fill="none"/>
<polyline points="1397.5,474.5 1439.5,474.5" stroke="#009600" stroke-width="1" fill="none"/>
<circle cx="1439.5" cy="460.5" r="2.7" fill="#009600"/>
<circle cx="1439.5" cy="474.5" r="2.7" fill="#009600"/>
<line x1="1277.5" y1="446.5" x2="1305.5" y2="446.5" stroke="#840000" stroke-width="1"/>
<rect x="1277" y="445" width="5" height="2" fill="#840000"/>
<text transform="translate(1294.8 445.19)" fill="#A90000" font-size="10.0" text-anchor="middle" textLength="5.6" lengthAdjust="spacing" stroke="#A90000" stroke-width="0.12">3</text>
<line x1="1277.5" y1="460.5" x2="1305.5" y2="460.5" stroke="#840000" stroke-width="1"/>
<rect x="1277" y="459" width="5" height="2" fill="#840000"/>
<text transform="translate(1294.8 459.29)" fill="#A90000" font-size="10.0" text-anchor="middle" textLength="5.6" lengthAdjust="spacing" stroke="#A90000" stroke-width="0.12">2</text>
<line x1="1277.5" y1="474.5" x2="1305.5" y2="474.5" stroke="#840000" stroke-width="1"/>
<rect x="1277" y="473" width="5" height="2" fill="#840000"/>
<text transform="translate(1294.8 473.38)" fill="#A90000" font-size="10.0" text-anchor="middle" textLength="5.6" lengthAdjust="spacing" stroke="#A90000" stroke-width="0.12">1</text>
<text transform="translate(1269.4 457.09) scale(0.88 1)" fill="#006464" font-size="10.0" text-anchor="end" textLength="13.1" lengthAdjust="spacing" stroke="#006464" stroke-width="0.18">J4</text>
<text transform="translate(1269.4 471.18) scale(0.88 1)" fill="#006464" font-size="10.0" text-anchor="end" textLength="97.3" lengthAdjust="spacing" stroke="#006464" stroke-width="0.18">Conn_01x03_Pin</text>
<rect x="1351.5" y="443.5" width="35" height="46" stroke="#840000" stroke-width="1" fill="#FFFFC2"/>
<line x1="1355.5" y1="454.5" x2="1383.5" y2="454.5" stroke="#840000" stroke-width="1"/>
<line x1="1369.5" y1="443.5" x2="1369.5" y2="454.5" stroke="#840000" stroke-width="1"/>
<circle cx="1357.5" cy="460.5" r="3" fill="none" stroke="#840000" stroke-width="1"/>
<circle cx="1380.5" cy="460.5" r="3" fill="none" stroke="#840000" stroke-width="1"/>
<line x1="1341.5" y1="460.5" x2="1354.5" y2="460.5" stroke="#840000" stroke-width="1"/>
<line x1="1383.5" y1="460.5" x2="1397.5" y2="460.5" stroke="#840000" stroke-width="1"/>
<line x1="1341.5" y1="474.5" x2="1397.5" y2="474.5" stroke="#840000" stroke-width="1"/>
<polygon points="1362,467.5 1372.5,474.5 1362,481.5" stroke="#840000" stroke-width="1" fill="#840000"/>
<line x1="1372.5" y1="467.5" x2="1372.5" y2="481.5" stroke="#840000" stroke-width="1"/>
<line x1="1367.1" y1="478.6" x2="1374.5" y2="486.5" stroke="#840000" stroke-width="1"/>
<line x1="1370.5" y1="486.5" x2="1374.5" y2="486.5" stroke="#840000" stroke-width="1"/>
<line x1="1373.5" y1="483" x2="1373.5" y2="486.5" stroke="#840000" stroke-width="1"/>
<line x1="1374.3" y1="479.18" x2="1381.7" y2="486.5" stroke="#840000" stroke-width="1"/>
<line x1="1378.5" y1="486.5" x2="1381.7" y2="486.5" stroke="#840000" stroke-width="1"/>
<line x1="1381.5" y1="483" x2="1381.5" y2="486.5" stroke="#840000" stroke-width="1"/>
<text transform="translate(1347.9 459.29)" fill="#A90000" font-size="10.0" text-anchor="middle" textLength="5.6" lengthAdjust="spacing" stroke="#A90000" stroke-width="0.12">2</text>
<text transform="translate(1347.9 473.38)" fill="#A90000" font-size="10.0" text-anchor="middle" textLength="5.6" lengthAdjust="spacing" stroke="#A90000" stroke-width="0.12">4</text>
<text transform="translate(1390.6 459.29)" fill="#A90000" font-size="10.0" text-anchor="middle" textLength="5.6" lengthAdjust="spacing" stroke="#A90000" stroke-width="0.12">1</text>
<text transform="translate(1390.6 473.38)" fill="#A90000" font-size="10.0" text-anchor="middle" textLength="5.6" lengthAdjust="spacing" stroke="#A90000" stroke-width="0.12">3</text>
<text transform="translate(1369.4 421.69) scale(0.88 1)" fill="#006464" font-size="10.0" text-anchor="middle" textLength="22.2" lengthAdjust="spacing" stroke="#006464" stroke-width="0.18">SW4</text>
<text transform="translate(1369.4 435.89) scale(0.88 1)" fill="#006464" font-size="10.0" text-anchor="middle" textLength="78.0" lengthAdjust="spacing" stroke="#006464" stroke-width="0.18">SW_Push_LED</text>
<polyline points="1305.5,524.5 1319.5,524.5" stroke="#009600" stroke-width="1" fill="none"/>
<circle cx="1319.5" cy="524.5" r="2.7" fill="#009600"/>
<polyline points="1305.5,538.5 1341.5,538.5" stroke="#009600" stroke-width="1" fill="none"/>
<polyline points="1305.5,552.5 1341.5,552.5" stroke="#009600" stroke-width="1" fill="none"/>
<polyline points="1397.5,538.5 1439.5,538.5" stroke="#009600" stroke-width="1" fill="none"/>
<polyline points="1397.5,552.5 1439.5,552.5" stroke="#009600" stroke-width="1" fill="none"/>
<circle cx="1439.5" cy="538.5" r="2.7" fill="#009600"/>
<circle cx="1439.5" cy="552.5" r="2.7" fill="#009600"/>
<line x1="1277.5" y1="524.5" x2="1305.5" y2="524.5" stroke="#840000" stroke-width="1"/>
<rect x="1277" y="523" width="5" height="2" fill="#840000"/>
<text transform="translate(1294.8 522.72)" fill="#A90000" font-size="10.0" text-anchor="middle" textLength="5.6" lengthAdjust="spacing" stroke="#A90000" stroke-width="0.12">3</text>
<line x1="1277.5" y1="538.5" x2="1305.5" y2="538.5" stroke="#840000" stroke-width="1"/>
<rect x="1277" y="537" width="5" height="2" fill="#840000"/>
<text transform="translate(1294.8 536.81)" fill="#A90000" font-size="10.0" text-anchor="middle" textLength="5.6" lengthAdjust="spacing" stroke="#A90000" stroke-width="0.12">2</text>
<line x1="1277.5" y1="552.5" x2="1305.5" y2="552.5" stroke="#840000" stroke-width="1"/>
<rect x="1277" y="551" width="5" height="2" fill="#840000"/>
<text transform="translate(1294.8 550.91)" fill="#A90000" font-size="10.0" text-anchor="middle" textLength="5.6" lengthAdjust="spacing" stroke="#A90000" stroke-width="0.12">1</text>
<text transform="translate(1269.4 534.61) scale(0.88 1)" fill="#006464" font-size="10.0" text-anchor="end" textLength="13.1" lengthAdjust="spacing" stroke="#006464" stroke-width="0.18">J3</text>
<text transform="translate(1269.4 548.71) scale(0.88 1)" fill="#006464" font-size="10.0" text-anchor="end" textLength="97.3" lengthAdjust="spacing" stroke="#006464" stroke-width="0.18">Conn_01x03_Pin</text>
<rect x="1351.5" y="520.5" width="35" height="46" stroke="#840000" stroke-width="1" fill="#FFFFC2"/>
<line x1="1355.5" y1="531.5" x2="1383.5" y2="531.5" stroke="#840000" stroke-width="1"/>
<line x1="1369.5" y1="520.5" x2="1369.5" y2="531.5" stroke="#840000" stroke-width="1"/>
<circle cx="1357.5" cy="538.5" r="3" fill="none" stroke="#840000" stroke-width="1"/>
<circle cx="1380.5" cy="538.5" r="3" fill="none" stroke="#840000" stroke-width="1"/>
<line x1="1341.5" y1="538.5" x2="1354.5" y2="538.5" stroke="#840000" stroke-width="1"/>
<line x1="1383.5" y1="538.5" x2="1397.5" y2="538.5" stroke="#840000" stroke-width="1"/>
<line x1="1341.5" y1="552.5" x2="1397.5" y2="552.5" stroke="#840000" stroke-width="1"/>
<polygon points="1362,545.5 1372.5,552.5 1362,559.5" stroke="#840000" stroke-width="1" fill="#840000"/>
<line x1="1372.5" y1="545.5" x2="1372.5" y2="559.5" stroke="#840000" stroke-width="1"/>
<line x1="1367.1" y1="556.6" x2="1374.5" y2="564.5" stroke="#840000" stroke-width="1"/>
<line x1="1370.5" y1="564.5" x2="1374.5" y2="564.5" stroke="#840000" stroke-width="1"/>
<line x1="1373.5" y1="561" x2="1373.5" y2="564.5" stroke="#840000" stroke-width="1"/>
<line x1="1374.3" y1="557.18" x2="1381.7" y2="564.5" stroke="#840000" stroke-width="1"/>
<line x1="1378.5" y1="564.5" x2="1381.7" y2="564.5" stroke="#840000" stroke-width="1"/>
<line x1="1381.5" y1="561" x2="1381.5" y2="564.5" stroke="#840000" stroke-width="1"/>
<text transform="translate(1347.9 536.81)" fill="#A90000" font-size="10.0" text-anchor="middle" textLength="5.6" lengthAdjust="spacing" stroke="#A90000" stroke-width="0.12">2</text>
<text transform="translate(1347.9 550.91)" fill="#A90000" font-size="10.0" text-anchor="middle" textLength="5.6" lengthAdjust="spacing" stroke="#A90000" stroke-width="0.12">4</text>
<text transform="translate(1390.6 536.81)" fill="#A90000" font-size="10.0" text-anchor="middle" textLength="5.6" lengthAdjust="spacing" stroke="#A90000" stroke-width="0.12">1</text>
<text transform="translate(1390.6 550.91)" fill="#A90000" font-size="10.0" text-anchor="middle" textLength="5.6" lengthAdjust="spacing" stroke="#A90000" stroke-width="0.12">3</text>
<text transform="translate(1369.4 499.22) scale(0.88 1)" fill="#006464" font-size="10.0" text-anchor="middle" textLength="22.2" lengthAdjust="spacing" stroke="#006464" stroke-width="0.18">SW3</text>
<text transform="translate(1369.4 513.42) scale(0.88 1)" fill="#006464" font-size="10.0" text-anchor="middle" textLength="78.0" lengthAdjust="spacing" stroke="#006464" stroke-width="0.18">SW_Push_LED</text>
<polyline points="1305.5,601.5 1319.5,601.5" stroke="#009600" stroke-width="1" fill="none"/>
<circle cx="1319.5" cy="601.5" r="2.7" fill="#009600"/>
<polyline points="1305.5,615.5 1341.5,615.5" stroke="#009600" stroke-width="1" fill="none"/>
<polyline points="1305.5,629.5 1341.5,629.5" stroke="#009600" stroke-width="1" fill="none"/>
<polyline points="1397.5,615.5 1439.5,615.5" stroke="#009600" stroke-width="1" fill="none"/>
<polyline points="1397.5,629.5 1439.5,629.5" stroke="#009600" stroke-width="1" fill="none"/>
<circle cx="1439.5" cy="615.5" r="2.7" fill="#009600"/>
<circle cx="1439.5" cy="629.5" r="2.7" fill="#009600"/>
<line x1="1277.5" y1="601.5" x2="1305.5" y2="601.5" stroke="#840000" stroke-width="1"/>
<rect x="1277" y="600" width="5" height="2" fill="#840000"/>
<text transform="translate(1294.8 600.24)" fill="#A90000" font-size="10.0" text-anchor="middle" textLength="5.6" lengthAdjust="spacing" stroke="#A90000" stroke-width="0.12">3</text>
<line x1="1277.5" y1="615.5" x2="1305.5" y2="615.5" stroke="#840000" stroke-width="1"/>
<rect x="1277" y="614" width="5" height="2" fill="#840000"/>
<text transform="translate(1294.8 614.34)" fill="#A90000" font-size="10.0" text-anchor="middle" textLength="5.6" lengthAdjust="spacing" stroke="#A90000" stroke-width="0.12">2</text>
<line x1="1277.5" y1="629.5" x2="1305.5" y2="629.5" stroke="#840000" stroke-width="1"/>
<rect x="1277" y="628" width="5" height="2" fill="#840000"/>
<text transform="translate(1294.8 628.43)" fill="#A90000" font-size="10.0" text-anchor="middle" textLength="5.6" lengthAdjust="spacing" stroke="#A90000" stroke-width="0.12">1</text>
<text transform="translate(1269.4 612.14) scale(0.88 1)" fill="#006464" font-size="10.0" text-anchor="end" textLength="13.1" lengthAdjust="spacing" stroke="#006464" stroke-width="0.18">J2</text>
<text transform="translate(1269.4 626.23) scale(0.88 1)" fill="#006464" font-size="10.0" text-anchor="end" textLength="97.3" lengthAdjust="spacing" stroke="#006464" stroke-width="0.18">Conn_01x03_Pin</text>
<rect x="1351.5" y="598.5" width="35" height="46" stroke="#840000" stroke-width="1" fill="#FFFFC2"/>
<line x1="1355.5" y1="609.5" x2="1383.5" y2="609.5" stroke="#840000" stroke-width="1"/>
<line x1="1369.5" y1="598.5" x2="1369.5" y2="609.5" stroke="#840000" stroke-width="1"/>
<circle cx="1357.5" cy="615.5" r="3" fill="none" stroke="#840000" stroke-width="1"/>
<circle cx="1380.5" cy="615.5" r="3" fill="none" stroke="#840000" stroke-width="1"/>
<line x1="1341.5" y1="615.5" x2="1354.5" y2="615.5" stroke="#840000" stroke-width="1"/>
<line x1="1383.5" y1="615.5" x2="1397.5" y2="615.5" stroke="#840000" stroke-width="1"/>
<line x1="1341.5" y1="629.5" x2="1397.5" y2="629.5" stroke="#840000" stroke-width="1"/>
<polygon points="1362,622.5 1372.5,629.5 1362,636.5" stroke="#840000" stroke-width="1" fill="#840000"/>
<line x1="1372.5" y1="622.5" x2="1372.5" y2="636.5" stroke="#840000" stroke-width="1"/>
<line x1="1367.1" y1="633.6" x2="1374.5" y2="641.5" stroke="#840000" stroke-width="1"/>
<line x1="1370.5" y1="641.5" x2="1374.5" y2="641.5" stroke="#840000" stroke-width="1"/>
<line x1="1373.5" y1="638" x2="1373.5" y2="641.5" stroke="#840000" stroke-width="1"/>
<line x1="1374.3" y1="634.18" x2="1381.7" y2="641.5" stroke="#840000" stroke-width="1"/>
<line x1="1378.5" y1="641.5" x2="1381.7" y2="641.5" stroke="#840000" stroke-width="1"/>
<line x1="1381.5" y1="638" x2="1381.5" y2="641.5" stroke="#840000" stroke-width="1"/>
<text transform="translate(1347.9 614.34)" fill="#A90000" font-size="10.0" text-anchor="middle" textLength="5.6" lengthAdjust="spacing" stroke="#A90000" stroke-width="0.12">2</text>
<text transform="translate(1347.9 628.43)" fill="#A90000" font-size="10.0" text-anchor="middle" textLength="5.6" lengthAdjust="spacing" stroke="#A90000" stroke-width="0.12">4</text>
<text transform="translate(1390.6 614.34)" fill="#A90000" font-size="10.0" text-anchor="middle" textLength="5.6" lengthAdjust="spacing" stroke="#A90000" stroke-width="0.12">1</text>
<text transform="translate(1390.6 628.43)" fill="#A90000" font-size="10.0" text-anchor="middle" textLength="5.6" lengthAdjust="spacing" stroke="#A90000" stroke-width="0.12">3</text>
<text transform="translate(1369.4 576.74) scale(0.88 1)" fill="#006464" font-size="10.0" text-anchor="middle" textLength="22.2" lengthAdjust="spacing" stroke="#006464" stroke-width="0.18">SW2</text>
<text transform="translate(1369.4 590.94) scale(0.88 1)" fill="#006464" font-size="10.0" text-anchor="middle" textLength="78.0" lengthAdjust="spacing" stroke="#006464" stroke-width="0.18">SW_Push_LED</text>
<polyline points="1305.5,679.5 1319.5,679.5" stroke="#009600" stroke-width="1" fill="none"/>
<circle cx="1319.5" cy="679.5" r="2.7" fill="#009600"/>
<polyline points="1305.5,693.5 1341.5,693.5" stroke="#009600" stroke-width="1" fill="none"/>
<polyline points="1305.5,707.5 1341.5,707.5" stroke="#009600" stroke-width="1" fill="none"/>
<polyline points="1397.5,693.5 1439.5,693.5" stroke="#009600" stroke-width="1" fill="none"/>
<polyline points="1397.5,707.5 1439.5,707.5" stroke="#009600" stroke-width="1" fill="none"/>
<circle cx="1439.5" cy="693.5" r="2.7" fill="#009600"/>
<circle cx="1439.5" cy="707.5" r="2.7" fill="#009600"/>
<line x1="1277.5" y1="679.5" x2="1305.5" y2="679.5" stroke="#840000" stroke-width="1"/>
<rect x="1277" y="678" width="5" height="2" fill="#840000"/>
<text transform="translate(1294.8 677.76)" fill="#A90000" font-size="10.0" text-anchor="middle" textLength="5.6" lengthAdjust="spacing" stroke="#A90000" stroke-width="0.12">3</text>
<line x1="1277.5" y1="693.5" x2="1305.5" y2="693.5" stroke="#840000" stroke-width="1"/>
<rect x="1277" y="692" width="5" height="2" fill="#840000"/>
<text transform="translate(1294.8 691.86)" fill="#A90000" font-size="10.0" text-anchor="middle" textLength="5.6" lengthAdjust="spacing" stroke="#A90000" stroke-width="0.12">2</text>
<line x1="1277.5" y1="707.5" x2="1305.5" y2="707.5" stroke="#840000" stroke-width="1"/>
<rect x="1277" y="706" width="5" height="2" fill="#840000"/>
<text transform="translate(1294.8 705.95)" fill="#A90000" font-size="10.0" text-anchor="middle" textLength="5.6" lengthAdjust="spacing" stroke="#A90000" stroke-width="0.12">1</text>
<text transform="translate(1269.4 689.66) scale(0.88 1)" fill="#006464" font-size="10.0" text-anchor="end" textLength="13.1" lengthAdjust="spacing" stroke="#006464" stroke-width="0.18">J1</text>
<text transform="translate(1269.4 703.75) scale(0.88 1)" fill="#006464" font-size="10.0" text-anchor="end" textLength="97.3" lengthAdjust="spacing" stroke="#006464" stroke-width="0.18">Conn_01x03_Pin</text>
<rect x="1351.5" y="675.5" width="35" height="46" stroke="#840000" stroke-width="1" fill="#FFFFC2"/>
<line x1="1355.5" y1="686.5" x2="1383.5" y2="686.5" stroke="#840000" stroke-width="1"/>
<line x1="1369.5" y1="675.5" x2="1369.5" y2="686.5" stroke="#840000" stroke-width="1"/>
<circle cx="1357.5" cy="693.5" r="3" fill="none" stroke="#840000" stroke-width="1"/>
<circle cx="1380.5" cy="693.5" r="3" fill="none" stroke="#840000" stroke-width="1"/>
<line x1="1341.5" y1="693.5" x2="1354.5" y2="693.5" stroke="#840000" stroke-width="1"/>
<line x1="1383.5" y1="693.5" x2="1397.5" y2="693.5" stroke="#840000" stroke-width="1"/>
<line x1="1341.5" y1="707.5" x2="1397.5" y2="707.5" stroke="#840000" stroke-width="1"/>
<polygon points="1362,700.5 1372.5,707.5 1362,714.5" stroke="#840000" stroke-width="1" fill="#840000"/>
<line x1="1372.5" y1="700.5" x2="1372.5" y2="714.5" stroke="#840000" stroke-width="1"/>
<line x1="1367.1" y1="711.6" x2="1374.5" y2="719.5" stroke="#840000" stroke-width="1"/>
<line x1="1370.5" y1="719.5" x2="1374.5" y2="719.5" stroke="#840000" stroke-width="1"/>
<line x1="1373.5" y1="716" x2="1373.5" y2="719.5" stroke="#840000" stroke-width="1"/>
<line x1="1374.3" y1="712.18" x2="1381.7" y2="719.5" stroke="#840000" stroke-width="1"/>
<line x1="1378.5" y1="719.5" x2="1381.7" y2="719.5" stroke="#840000" stroke-width="1"/>
<line x1="1381.5" y1="716" x2="1381.5" y2="719.5" stroke="#840000" stroke-width="1"/>
<text transform="translate(1347.9 691.86)" fill="#A90000" font-size="10.0" text-anchor="middle" textLength="5.6" lengthAdjust="spacing" stroke="#A90000" stroke-width="0.12">2</text>
<text transform="translate(1347.9 705.95)" fill="#A90000" font-size="10.0" text-anchor="middle" textLength="5.6" lengthAdjust="spacing" stroke="#A90000" stroke-width="0.12">4</text>
<text transform="translate(1390.6 691.86)" fill="#A90000" font-size="10.0" text-anchor="middle" textLength="5.6" lengthAdjust="spacing" stroke="#A90000" stroke-width="0.12">1</text>
<text transform="translate(1390.6 705.95)" fill="#A90000" font-size="10.0" text-anchor="middle" textLength="5.6" lengthAdjust="spacing" stroke="#A90000" stroke-width="0.12">3</text>
<text transform="translate(1369.4 654.26) scale(0.88 1)" fill="#006464" font-size="10.0" text-anchor="middle" textLength="22.2" lengthAdjust="spacing" stroke="#006464" stroke-width="0.18">SW1</text>
<text transform="translate(1369.4 668.46) scale(0.88 1)" fill="#006464" font-size="10.0" text-anchor="middle" textLength="78.0" lengthAdjust="spacing" stroke="#006464" stroke-width="0.18">SW_Push_LED</text>
<line x1="1439.5" y1="756.5" x2="1439.5" y2="763.5" stroke="#840000" stroke-width="1"/>
<polygon points="1432.5,763.5 1446.5,763.5 1439.5,770.5" stroke="#840000" stroke-width="1" fill="none"/>
<text transform="translate(1439.5 788.99) scale(0.88 1)" fill="#006464" font-size="10.0" text-anchor="middle" textLength="23.1" lengthAdjust="spacing" stroke="#006464" stroke-width="0.18">GND</text>
</svg></body></html>
